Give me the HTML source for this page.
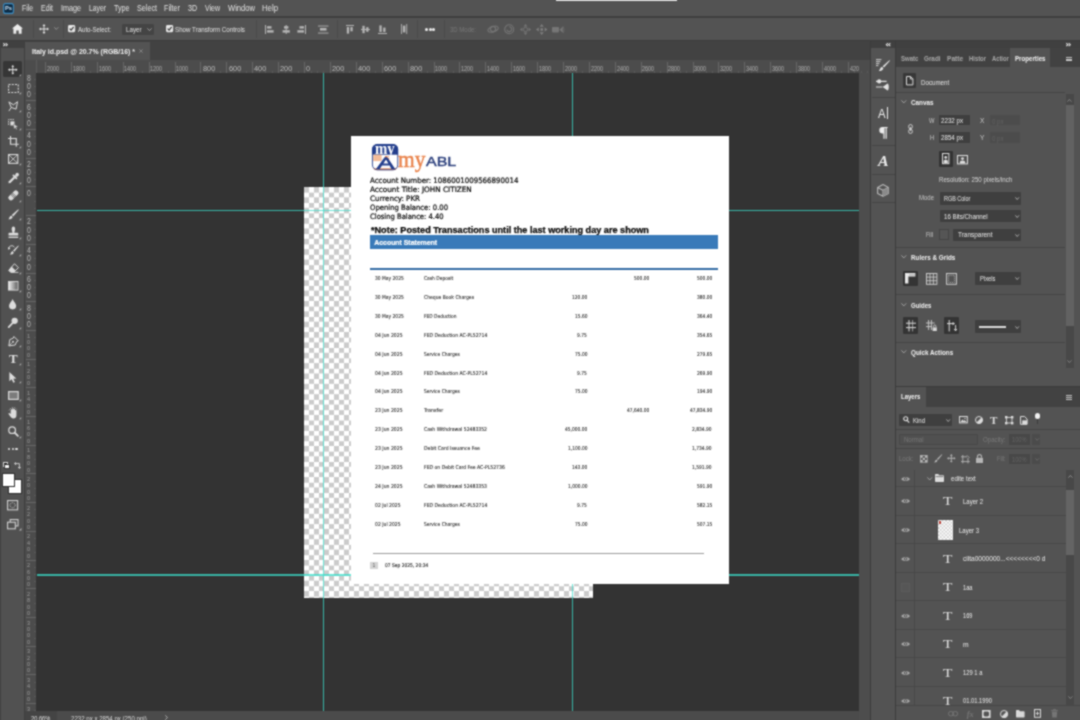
<!DOCTYPE html>
<html lang="en"><head><meta charset="utf-8"><title>Photoshop</title>
<style>
html,body{margin:0;padding:0;background:#535353;}
body{width:1080px;height:720px;overflow:hidden;font-family:"Liberation Sans",sans-serif;}
#r{position:relative;width:1080px;height:720px;overflow:hidden;background:#535353;filter:url(#soft);}
#r div,#r span,#r svg{position:absolute;}
#r svg{overflow:visible;}
.t{white-space:nowrap;line-height:1;transform-origin:0 50%;}
</style></head><body><svg width="0" height="0" style="position:absolute"><filter id="soft" x="0" y="0" width="100%" height="100%" color-interpolation-filters="sRGB"><feConvolveMatrix order="3" kernelMatrix="1 2 1 2 6 2 1 2 1" divisor="18" edgeMode="duplicate" preserveAlpha="true"/></filter></svg><div id="r">
<div style="left:0px;top:0px;width:1080px;height:16px;background:#535353;"></div>
<div style="left:0px;top:16px;width:1080px;height:1.5px;background:#3f3f3f;"></div>
<div style="left:555.5px;top:0px;width:121.5px;height:1.3px;background:#e6e6e6;"></div>
<svg style="left:3.3px;top:2.6px;" width="11" height="11" viewBox="0 0 11 11"><rect x="0.6" y="0.6" width="9.8" height="9.8" rx="2" fill="#0b2a44" stroke="#3f8fc4" stroke-width="1.1"/></svg>
<span class="t" style='left:5.10px;top:6.00px;font-size:5.6px;color:#cfe6f7;font-weight:bold;transform:scaleX(1.023);'>Ps</span>
<span class="t" style='left:22.00px;top:4.00px;font-size:8.4px;color:#e2e2e2;transform:scaleX(0.815);'>File</span>
<span class="t" style='left:41.00px;top:4.00px;font-size:8.4px;color:#e2e2e2;transform:scaleX(0.831);'>Edit</span>
<span class="t" style='left:61.00px;top:4.00px;font-size:8.4px;color:#e2e2e2;transform:scaleX(0.859);'>Image</span>
<span class="t" style='left:89.00px;top:4.00px;font-size:8.4px;color:#e2e2e2;transform:scaleX(0.811);'>Layer</span>
<span class="t" style='left:114.00px;top:4.00px;font-size:8.4px;color:#e2e2e2;transform:scaleX(0.854);'>Type</span>
<span class="t" style='left:137.00px;top:4.00px;font-size:8.4px;color:#e2e2e2;transform:scaleX(0.859);'>Select</span>
<span class="t" style='left:164.00px;top:4.00px;font-size:8.4px;color:#e2e2e2;transform:scaleX(0.859);'>Filter</span>
<span class="t" style='left:188.00px;top:4.00px;font-size:8.4px;color:#e2e2e2;transform:scaleX(0.840);'>3D</span>
<span class="t" style='left:205.00px;top:4.00px;font-size:8.4px;color:#e2e2e2;transform:scaleX(0.833);'>View</span>
<span class="t" style='left:228.00px;top:4.00px;font-size:8.4px;color:#e2e2e2;transform:scaleX(0.906);'>Window</span>
<span class="t" style='left:262.00px;top:4.00px;font-size:8.4px;color:#e2e2e2;transform:scaleX(0.928);'>Help</span>
<div style="left:0px;top:17.5px;width:1080px;height:22.5px;background:#535353;"></div>
<div style="left:0px;top:40px;width:1080px;height:1px;background:#3c3c3c;"></div>
<div style="left:32.5px;top:20px;width:1px;height:18px;background:#4a4a4a;"></div>
<div style="left:63px;top:20px;width:1px;height:18px;background:#4a4a4a;"></div>
<div style="left:255.5px;top:20px;width:1px;height:18px;background:#4a4a4a;"></div>
<div style="left:336.5px;top:20px;width:1px;height:18px;background:#4a4a4a;"></div>
<div style="left:416.5px;top:20px;width:1px;height:18px;background:#4a4a4a;"></div>
<div style="left:443.5px;top:20px;width:1px;height:18px;background:#4a4a4a;"></div>
<svg style="left:12px;top:24.4px;" width="11" height="9.8" viewBox="0 0 11 9.8"><path d="M5.5 0 L11 4.6 L9.6 4.6 L9.6 9.8 L6.7 9.8 L6.7 6.4 L4.3 6.4 L4.3 9.8 L1.4 9.8 L1.4 4.6 L0 4.6 Z" fill="#ececec"/></svg>
<svg style="left:38.5px;top:24px;" width="10" height="10" viewBox="0 0 10 10"><path d="M5 0 L6.5 1.9 L5.45 1.9 L5.45 4.55 L8.1 4.55 L8.1 3.5 L10 5 L8.1 6.5 L8.1 5.45 L5.45 5.45 L5.45 8.1 L6.5 8.1 L5 10 L3.5 8.1 L4.55 8.1 L4.55 5.45 L1.9 5.45 L1.9 6.5 L0 5 L1.9 3.5 L1.9 4.55 L4.55 4.55 L4.55 1.9 L3.5 1.9 Z" fill="#e8e8e8"/></svg>
<svg style="left:54.4px;top:27.4px;" width="4.6" height="3" viewBox="0 0 4.6 3"><path d="M0.3 0.3 L2.3 2.4 L4.3 0.3" fill="none" stroke="#9a9a9a" stroke-width="0.9"/></svg>
<svg style="left:68.3px;top:25.3px;" width="7.2" height="7.2" viewBox="0 0 7.2 7.2"><rect x="0" y="0" width="7.2" height="7.2" rx="1.4" fill="#e6e6e6"/><path d="M1.6 3.7 L3.1 5.2 L5.7 1.9" fill="none" stroke="#3a3a3a" stroke-width="1.2"/></svg>
<svg style="left:165.5px;top:25.3px;" width="7.2" height="7.2" viewBox="0 0 7.2 7.2"><rect x="0" y="0" width="7.2" height="7.2" rx="1.4" fill="#e6e6e6"/><path d="M1.6 3.7 L3.1 5.2 L5.7 1.9" fill="none" stroke="#3a3a3a" stroke-width="1.2"/></svg>
<span class="t" style='left:78.00px;top:25.50px;font-size:7.4px;color:#e2e2e2;transform:scaleX(0.820);'>Auto-Select:</span>
<div style="left:121.7px;top:23.7px;width:32px;height:11.5px;background:#444444;border-radius:1.5px;"></div>
<span class="t" style='left:125.70px;top:26.00px;font-size:7.2px;color:#e2e2e2;transform:scaleX(0.862);'>Layer</span>
<svg style="left:147.3px;top:28px;" width="5" height="3.2" viewBox="0 0 5 3.2"><path d="M0.4 0.4 L2.5 2.6 L4.6 0.4" fill="none" stroke="#a8a8a8" stroke-width="0.9"/></svg>
<span class="t" style='left:175.00px;top:25.50px;font-size:7.4px;color:#e2e2e2;transform:scaleX(0.839);'>Show Transform Controls</span>
<svg style="left:265px;top:24.7px;" width="9" height="9" viewBox="0 0 9 9"><rect x="0" y="0" width="1" height="9" fill="#b6b6b6"/><rect x="2" y="1.2" width="4.5" height="2.4" fill="#b6b6b6"/><rect x="2" y="5.2" width="6.6" height="2.4" fill="#b6b6b6"/></svg>
<svg style="left:281.5px;top:24.7px;" width="9" height="9" viewBox="0 0 9 9"><rect x="3.7" y="0" width="1" height="9" fill="#b6b6b6"/><rect x="2" y="1.2" width="4.4" height="2.4" fill="#b6b6b6"/><rect x="0.6" y="5.2" width="7.2" height="2.4" fill="#b6b6b6"/></svg>
<svg style="left:297px;top:24.7px;" width="9" height="9" viewBox="0 0 9 9"><rect x="8" y="0" width="1" height="9" fill="#b6b6b6"/><rect x="2.5" y="1.2" width="4.5" height="2.4" fill="#b6b6b6"/><rect x="0.4" y="5.2" width="6.6" height="2.4" fill="#b6b6b6"/></svg>
<svg style="left:317.5px;top:24.7px;" width="10.5" height="9" viewBox="0 0 10.5 9"><rect x="0" y="0.6" width="10.5" height="0.9" fill="#b6b6b6"/><rect x="0" y="7.6" width="10.5" height="0.9" fill="#b6b6b6"/><rect x="2" y="3" width="6.5" height="2.6" fill="#b6b6b6"/></svg>
<svg style="left:346px;top:24.7px;" width="8" height="9" viewBox="0 0 8 9"><rect x="0" y="0" width="8" height="1" fill="#b6b6b6"/><rect x="0.8" y="2" width="2.3" height="6.6" fill="#b6b6b6"/><rect x="4.4" y="2" width="2.3" height="4.3" fill="#b6b6b6"/></svg>
<svg style="left:361px;top:24.7px;" width="9" height="9" viewBox="0 0 9 9"><rect x="0" y="4" width="9" height="1" fill="#b6b6b6"/><rect x="1.4" y="0.8" width="2.3" height="7.4" fill="#b6b6b6"/><rect x="5.2" y="2.2" width="2.3" height="4.6" fill="#b6b6b6"/></svg>
<svg style="left:378px;top:24.7px;" width="9" height="9" viewBox="0 0 9 9"><rect x="0" y="8" width="9" height="1" fill="#b6b6b6"/><rect x="1.4" y="0.4" width="2.3" height="6.6" fill="#b6b6b6"/><rect x="5.2" y="2.6" width="2.3" height="4.4" fill="#b6b6b6"/></svg>
<svg style="left:400.5px;top:24px;" width="6.2" height="10" viewBox="0 0 6.2 10"><rect x="0" y="0" width="0.9" height="10" fill="#b6b6b6"/><rect x="5.3" y="0" width="0.9" height="10" fill="#b6b6b6"/><rect x="1.9" y="1.6" width="2.4" height="6.8" fill="#b6b6b6"/></svg>
<div style="left:424.8px;top:27.5px;width:3px;height:3px;background:#f0f0f0;border-radius:50%;"></div>
<div style="left:428.6px;top:27.5px;width:3px;height:3px;background:#f0f0f0;border-radius:50%;"></div>
<div style="left:432.40000000000003px;top:27.5px;width:3px;height:3px;background:#f0f0f0;border-radius:50%;"></div>
<span class="t" style='left:450.00px;top:25.50px;font-size:7.2px;color:#787878;transform:scaleX(0.834);'>3D Mode:</span>
<svg style="left:487px;top:24px;" width="12" height="10" viewBox="0 0 12 10"><ellipse cx="6" cy="5.2" rx="5.3" ry="2.6" fill="none" stroke="#767676" stroke-width="1.1" transform="rotate(-20 6 5)"/><circle cx="6" cy="5" r="2.6" fill="none" stroke="#767676" stroke-width="1.1"/></svg>
<svg style="left:504px;top:23.8px;" width="10.5" height="10.5" viewBox="0 0 10.5 10.5"><circle cx="5.2" cy="5.2" r="4.5" fill="none" stroke="#767676" stroke-width="1.1"/><path d="M5.2 2.8 A2.4 2.4 0 1 1 2.9 5.6" fill="none" stroke="#767676" stroke-width="1.1"/></svg>
<svg style="left:520px;top:23.5px;" width="11" height="11" viewBox="0 0 11 11"><path d="M5.5 0 L7.5 2.4 L3.5 2.4 Z M5.5 11 L7.5 8.6 L3.5 8.6 Z M0 5.5 L2.4 3.5 L2.4 7.5 Z M11 5.5 L8.6 3.5 L8.6 7.5 Z" fill="#767676"/><circle cx="5.5" cy="5.5" r="2.1" fill="none" stroke="#767676" stroke-width="1"/></svg>
<svg style="left:536px;top:23.5px;" width="11.5" height="11" viewBox="0 0 11.5 11"><path d="M5.7 0 L7.7 2.8 L3.7 2.8 Z M5.7 11 L7.7 8.2 L3.7 8.2 Z M0 5.5 L2.8 3.5 L2.8 7.5 Z M11.4 5.5 L8.6 3.5 L8.6 7.5 Z" fill="#808080"/><rect x="4.4" y="4.2" width="2.6" height="2.6" fill="#808080"/></svg>
<svg style="left:552px;top:25.5px;" width="12" height="7.5" viewBox="0 0 12 7.5"><rect x="0" y="1" width="7" height="5.4" rx="0.8" fill="#767676"/><path d="M7.4 3.7 L10.8 0.6 L10.8 6.8 Z" fill="#767676"/><path d="M11.4 0.5 L12 3.7 L11.4 7" fill="none" stroke="#767676" stroke-width="0.6"/></svg>
<div style="left:0px;top:41px;width:1080px;height:19px;background:#424242;"></div>
<div style="left:0px;top:41px;width:24.5px;height:7.3px;background:#404040;"></div>
<svg style="left:3.4px;top:42.8px;" width="5" height="3.4" viewBox="0 0 5 3.4"><path d="M0.3 0.2 L1.9 1.7 L0.3 3.2 M2.7 0.2 L4.3 1.7 L2.7 3.2" fill="none" stroke="#e4e4e4" stroke-width="1.1"/></svg>
<div style="left:25px;top:41.5px;width:124.5px;height:18.5px;background:#535353;"></div>
<span class="t" style='left:32.00px;top:47.50px;font-size:8px;color:#f2f2f2;font-weight:bold;transform:scaleX(0.869);'>Italy id.psd @ 20.7% (RGB/16) *</span>
<svg style="left:139.2px;top:49px;" width="4" height="4" viewBox="0 0 4 4"><path d="M0.3 0.3 L3.7 3.7 M3.7 0.3 L0.3 3.7" stroke="#8c8c8c" stroke-width="0.8"/></svg>
<div style="left:25px;top:60px;width:845px;height:660px;background:#333333;"></div>
<div style="left:25px;top:60px;width:844.5px;height:13px;background:#4c4c4c;"></div>
<div style="left:25px;top:73px;width:11.4px;height:638px;background:#4c4c4c;"></div>
<div style="left:859px;top:73px;width:10.5px;height:647px;background:#4d4d4d;"></div>
<div style="left:869.5px;top:41px;width:1.3px;height:679px;background:#3b3b3b;"></div>
<div style="left:45.0px;top:62px;width:1px;height:11px;background:#676767;"></div>
<span class="t" style='left:46.70px;top:66.00px;font-size:6.4px;color:#b0b0b0;transform:scaleX(0.837);'>2000</span>
<div style="left:51.5px;top:71px;width:1px;height:2px;background:#5a5a5a;"></div>
<div style="left:58.0px;top:71px;width:1px;height:2px;background:#5a5a5a;"></div>
<div style="left:64.4px;top:71px;width:1px;height:2px;background:#5a5a5a;"></div>
<div style="left:70.9px;top:62px;width:1px;height:11px;background:#676767;"></div>
<span class="t" style='left:72.60px;top:66.00px;font-size:6.4px;color:#b0b0b0;transform:scaleX(0.837);'>1800</span>
<div style="left:77.4px;top:71px;width:1px;height:2px;background:#5a5a5a;"></div>
<div style="left:83.9px;top:71px;width:1px;height:2px;background:#5a5a5a;"></div>
<div style="left:90.3px;top:71px;width:1px;height:2px;background:#5a5a5a;"></div>
<div style="left:96.8px;top:62px;width:1px;height:11px;background:#676767;"></div>
<span class="t" style='left:98.50px;top:66.00px;font-size:6.4px;color:#b0b0b0;transform:scaleX(0.837);'>1600</span>
<div style="left:103.3px;top:71px;width:1px;height:2px;background:#5a5a5a;"></div>
<div style="left:109.8px;top:71px;width:1px;height:2px;background:#5a5a5a;"></div>
<div style="left:116.2px;top:71px;width:1px;height:2px;background:#5a5a5a;"></div>
<div style="left:122.7px;top:62px;width:1px;height:11px;background:#676767;"></div>
<span class="t" style='left:124.40px;top:66.00px;font-size:6.4px;color:#b0b0b0;transform:scaleX(0.837);'>1400</span>
<div style="left:129.2px;top:71px;width:1px;height:2px;background:#5a5a5a;"></div>
<div style="left:135.7px;top:71px;width:1px;height:2px;background:#5a5a5a;"></div>
<div style="left:142.1px;top:71px;width:1px;height:2px;background:#5a5a5a;"></div>
<div style="left:148.6px;top:62px;width:1px;height:11px;background:#676767;"></div>
<span class="t" style='left:150.30px;top:66.00px;font-size:6.4px;color:#b0b0b0;transform:scaleX(0.837);'>1200</span>
<div style="left:155.1px;top:71px;width:1px;height:2px;background:#5a5a5a;"></div>
<div style="left:161.6px;top:71px;width:1px;height:2px;background:#5a5a5a;"></div>
<div style="left:168.0px;top:71px;width:1px;height:2px;background:#5a5a5a;"></div>
<div style="left:174.5px;top:62px;width:1px;height:11px;background:#676767;"></div>
<span class="t" style='left:176.20px;top:66.00px;font-size:6.4px;color:#b0b0b0;transform:scaleX(0.837);'>1000</span>
<div style="left:181.0px;top:71px;width:1px;height:2px;background:#5a5a5a;"></div>
<div style="left:187.4px;top:71px;width:1px;height:2px;background:#5a5a5a;"></div>
<div style="left:193.9px;top:71px;width:1px;height:2px;background:#5a5a5a;"></div>
<div style="left:200.4px;top:62px;width:1px;height:11px;background:#676767;"></div>
<span class="t" style='left:202.60px;top:65.00px;font-size:7.8px;color:#bcbcbc;transform:scaleX(0.945);'>800</span>
<div style="left:206.9px;top:71px;width:1px;height:2px;background:#5a5a5a;"></div>
<div style="left:213.3px;top:71px;width:1px;height:2px;background:#5a5a5a;"></div>
<div style="left:219.8px;top:71px;width:1px;height:2px;background:#5a5a5a;"></div>
<div style="left:226.3px;top:62px;width:1px;height:11px;background:#676767;"></div>
<span class="t" style='left:228.50px;top:65.00px;font-size:7.8px;color:#bcbcbc;transform:scaleX(0.945);'>600</span>
<div style="left:232.8px;top:71px;width:1px;height:2px;background:#5a5a5a;"></div>
<div style="left:239.2px;top:71px;width:1px;height:2px;background:#5a5a5a;"></div>
<div style="left:245.7px;top:71px;width:1px;height:2px;background:#5a5a5a;"></div>
<div style="left:252.2px;top:62px;width:1px;height:11px;background:#676767;"></div>
<span class="t" style='left:254.40px;top:65.00px;font-size:7.8px;color:#bcbcbc;transform:scaleX(0.945);'>400</span>
<div style="left:258.7px;top:71px;width:1px;height:2px;background:#5a5a5a;"></div>
<div style="left:265.1px;top:71px;width:1px;height:2px;background:#5a5a5a;"></div>
<div style="left:271.6px;top:71px;width:1px;height:2px;background:#5a5a5a;"></div>
<div style="left:278.1px;top:62px;width:1px;height:11px;background:#676767;"></div>
<span class="t" style='left:280.30px;top:65.00px;font-size:7.8px;color:#bcbcbc;transform:scaleX(0.945);'>200</span>
<div style="left:284.6px;top:71px;width:1px;height:2px;background:#5a5a5a;"></div>
<div style="left:291.1px;top:71px;width:1px;height:2px;background:#5a5a5a;"></div>
<div style="left:297.5px;top:71px;width:1px;height:2px;background:#5a5a5a;"></div>
<div style="left:304.0px;top:62px;width:1px;height:11px;background:#676767;"></div>
<span class="t" style='left:306.20px;top:65.00px;font-size:7.8px;color:#bcbcbc;transform:scaleX(0.944);'>0</span>
<div style="left:310.5px;top:71px;width:1px;height:2px;background:#5a5a5a;"></div>
<div style="left:316.9px;top:71px;width:1px;height:2px;background:#5a5a5a;"></div>
<div style="left:323.4px;top:71px;width:1px;height:2px;background:#5a5a5a;"></div>
<div style="left:329.9px;top:62px;width:1px;height:11px;background:#676767;"></div>
<span class="t" style='left:332.10px;top:65.00px;font-size:7.8px;color:#bcbcbc;transform:scaleX(0.945);'>200</span>
<div style="left:336.4px;top:71px;width:1px;height:2px;background:#5a5a5a;"></div>
<div style="left:342.8px;top:71px;width:1px;height:2px;background:#5a5a5a;"></div>
<div style="left:349.3px;top:71px;width:1px;height:2px;background:#5a5a5a;"></div>
<div style="left:355.8px;top:62px;width:1px;height:11px;background:#676767;"></div>
<span class="t" style='left:358.00px;top:65.00px;font-size:7.8px;color:#bcbcbc;transform:scaleX(0.945);'>400</span>
<div style="left:362.3px;top:71px;width:1px;height:2px;background:#5a5a5a;"></div>
<div style="left:368.8px;top:71px;width:1px;height:2px;background:#5a5a5a;"></div>
<div style="left:375.2px;top:71px;width:1px;height:2px;background:#5a5a5a;"></div>
<div style="left:381.7px;top:62px;width:1px;height:11px;background:#676767;"></div>
<span class="t" style='left:383.90px;top:65.00px;font-size:7.8px;color:#bcbcbc;transform:scaleX(0.945);'>600</span>
<div style="left:388.2px;top:71px;width:1px;height:2px;background:#5a5a5a;"></div>
<div style="left:394.6px;top:71px;width:1px;height:2px;background:#5a5a5a;"></div>
<div style="left:401.1px;top:71px;width:1px;height:2px;background:#5a5a5a;"></div>
<div style="left:407.6px;top:62px;width:1px;height:11px;background:#676767;"></div>
<span class="t" style='left:409.80px;top:65.00px;font-size:7.8px;color:#bcbcbc;transform:scaleX(0.945);'>800</span>
<div style="left:414.1px;top:71px;width:1px;height:2px;background:#5a5a5a;"></div>
<div style="left:420.6px;top:71px;width:1px;height:2px;background:#5a5a5a;"></div>
<div style="left:427.0px;top:71px;width:1px;height:2px;background:#5a5a5a;"></div>
<div style="left:433.5px;top:62px;width:1px;height:11px;background:#676767;"></div>
<span class="t" style='left:435.20px;top:66.00px;font-size:6.4px;color:#b0b0b0;transform:scaleX(0.837);'>1000</span>
<div style="left:440.0px;top:71px;width:1px;height:2px;background:#5a5a5a;"></div>
<div style="left:446.4px;top:71px;width:1px;height:2px;background:#5a5a5a;"></div>
<div style="left:452.9px;top:71px;width:1px;height:2px;background:#5a5a5a;"></div>
<div style="left:459.4px;top:62px;width:1px;height:11px;background:#676767;"></div>
<span class="t" style='left:461.10px;top:66.00px;font-size:6.4px;color:#b0b0b0;transform:scaleX(0.837);'>1200</span>
<div style="left:465.9px;top:71px;width:1px;height:2px;background:#5a5a5a;"></div>
<div style="left:472.3px;top:71px;width:1px;height:2px;background:#5a5a5a;"></div>
<div style="left:478.8px;top:71px;width:1px;height:2px;background:#5a5a5a;"></div>
<div style="left:485.3px;top:62px;width:1px;height:11px;background:#676767;"></div>
<span class="t" style='left:487.00px;top:66.00px;font-size:6.4px;color:#b0b0b0;transform:scaleX(0.837);'>1400</span>
<div style="left:491.8px;top:71px;width:1px;height:2px;background:#5a5a5a;"></div>
<div style="left:498.2px;top:71px;width:1px;height:2px;background:#5a5a5a;"></div>
<div style="left:504.7px;top:71px;width:1px;height:2px;background:#5a5a5a;"></div>
<div style="left:511.2px;top:62px;width:1px;height:11px;background:#676767;"></div>
<span class="t" style='left:512.90px;top:66.00px;font-size:6.4px;color:#b0b0b0;transform:scaleX(0.837);'>1600</span>
<div style="left:517.7px;top:71px;width:1px;height:2px;background:#5a5a5a;"></div>
<div style="left:524.1px;top:71px;width:1px;height:2px;background:#5a5a5a;"></div>
<div style="left:530.6px;top:71px;width:1px;height:2px;background:#5a5a5a;"></div>
<div style="left:537.1px;top:62px;width:1px;height:11px;background:#676767;"></div>
<span class="t" style='left:538.80px;top:66.00px;font-size:6.4px;color:#b0b0b0;transform:scaleX(0.837);'>1800</span>
<div style="left:543.6px;top:71px;width:1px;height:2px;background:#5a5a5a;"></div>
<div style="left:550.1px;top:71px;width:1px;height:2px;background:#5a5a5a;"></div>
<div style="left:556.5px;top:71px;width:1px;height:2px;background:#5a5a5a;"></div>
<div style="left:563.0px;top:62px;width:1px;height:11px;background:#676767;"></div>
<span class="t" style='left:564.70px;top:66.00px;font-size:6.4px;color:#b0b0b0;transform:scaleX(0.837);'>2000</span>
<div style="left:569.5px;top:71px;width:1px;height:2px;background:#5a5a5a;"></div>
<div style="left:576.0px;top:71px;width:1px;height:2px;background:#5a5a5a;"></div>
<div style="left:582.4px;top:71px;width:1px;height:2px;background:#5a5a5a;"></div>
<div style="left:588.9px;top:62px;width:1px;height:11px;background:#676767;"></div>
<span class="t" style='left:590.60px;top:66.00px;font-size:6.4px;color:#b0b0b0;transform:scaleX(0.837);'>2200</span>
<div style="left:595.4px;top:71px;width:1px;height:2px;background:#5a5a5a;"></div>
<div style="left:601.9px;top:71px;width:1px;height:2px;background:#5a5a5a;"></div>
<div style="left:608.3px;top:71px;width:1px;height:2px;background:#5a5a5a;"></div>
<div style="left:614.8px;top:62px;width:1px;height:11px;background:#676767;"></div>
<span class="t" style='left:616.50px;top:66.00px;font-size:6.4px;color:#b0b0b0;transform:scaleX(0.837);'>2400</span>
<div style="left:621.3px;top:71px;width:1px;height:2px;background:#5a5a5a;"></div>
<div style="left:627.8px;top:71px;width:1px;height:2px;background:#5a5a5a;"></div>
<div style="left:634.2px;top:71px;width:1px;height:2px;background:#5a5a5a;"></div>
<div style="left:640.7px;top:62px;width:1px;height:11px;background:#676767;"></div>
<span class="t" style='left:642.40px;top:66.00px;font-size:6.4px;color:#b0b0b0;transform:scaleX(0.837);'>2600</span>
<div style="left:647.2px;top:71px;width:1px;height:2px;background:#5a5a5a;"></div>
<div style="left:653.7px;top:71px;width:1px;height:2px;background:#5a5a5a;"></div>
<div style="left:660.1px;top:71px;width:1px;height:2px;background:#5a5a5a;"></div>
<div style="left:666.6px;top:62px;width:1px;height:11px;background:#676767;"></div>
<span class="t" style='left:668.30px;top:66.00px;font-size:6.4px;color:#b0b0b0;transform:scaleX(0.837);'>2800</span>
<div style="left:673.1px;top:71px;width:1px;height:2px;background:#5a5a5a;"></div>
<div style="left:679.5px;top:71px;width:1px;height:2px;background:#5a5a5a;"></div>
<div style="left:686.0px;top:71px;width:1px;height:2px;background:#5a5a5a;"></div>
<div style="left:692.5px;top:62px;width:1px;height:11px;background:#676767;"></div>
<span class="t" style='left:694.20px;top:66.00px;font-size:6.4px;color:#b0b0b0;transform:scaleX(0.837);'>3000</span>
<div style="left:699.0px;top:71px;width:1px;height:2px;background:#5a5a5a;"></div>
<div style="left:705.5px;top:71px;width:1px;height:2px;background:#5a5a5a;"></div>
<div style="left:711.9px;top:71px;width:1px;height:2px;background:#5a5a5a;"></div>
<div style="left:718.4px;top:62px;width:1px;height:11px;background:#676767;"></div>
<span class="t" style='left:720.10px;top:66.00px;font-size:6.4px;color:#b0b0b0;transform:scaleX(0.837);'>3200</span>
<div style="left:724.9px;top:71px;width:1px;height:2px;background:#5a5a5a;"></div>
<div style="left:731.4px;top:71px;width:1px;height:2px;background:#5a5a5a;"></div>
<div style="left:737.8px;top:71px;width:1px;height:2px;background:#5a5a5a;"></div>
<div style="left:744.3px;top:62px;width:1px;height:11px;background:#676767;"></div>
<span class="t" style='left:746.00px;top:66.00px;font-size:6.4px;color:#b0b0b0;transform:scaleX(0.837);'>3400</span>
<div style="left:750.8px;top:71px;width:1px;height:2px;background:#5a5a5a;"></div>
<div style="left:757.2px;top:71px;width:1px;height:2px;background:#5a5a5a;"></div>
<div style="left:763.7px;top:71px;width:1px;height:2px;background:#5a5a5a;"></div>
<div style="left:770.2px;top:62px;width:1px;height:11px;background:#676767;"></div>
<span class="t" style='left:771.90px;top:66.00px;font-size:6.4px;color:#b0b0b0;transform:scaleX(0.837);'>3600</span>
<div style="left:776.7px;top:71px;width:1px;height:2px;background:#5a5a5a;"></div>
<div style="left:783.2px;top:71px;width:1px;height:2px;background:#5a5a5a;"></div>
<div style="left:789.6px;top:71px;width:1px;height:2px;background:#5a5a5a;"></div>
<div style="left:796.1px;top:62px;width:1px;height:11px;background:#676767;"></div>
<span class="t" style='left:797.80px;top:66.00px;font-size:6.4px;color:#b0b0b0;transform:scaleX(0.837);'>3800</span>
<div style="left:802.6px;top:71px;width:1px;height:2px;background:#5a5a5a;"></div>
<div style="left:809.0px;top:71px;width:1px;height:2px;background:#5a5a5a;"></div>
<div style="left:815.5px;top:71px;width:1px;height:2px;background:#5a5a5a;"></div>
<div style="left:822.0px;top:62px;width:1px;height:11px;background:#676767;"></div>
<span class="t" style='left:823.70px;top:66.00px;font-size:6.4px;color:#b0b0b0;transform:scaleX(0.837);'>4000</span>
<div style="left:828.5px;top:71px;width:1px;height:2px;background:#5a5a5a;"></div>
<div style="left:835.0px;top:71px;width:1px;height:2px;background:#5a5a5a;"></div>
<div style="left:841.4px;top:71px;width:1px;height:2px;background:#5a5a5a;"></div>
<div style="left:847.9px;top:62px;width:1px;height:11px;background:#676767;"></div>
<span class="t" style='left:849.60px;top:66.00px;font-size:6.4px;color:#b0b0b0;transform:scaleX(0.843);'>420</span>
<div style="left:854.4px;top:71px;width:1px;height:2px;background:#5a5a5a;"></div>
<div style="left:860.9px;top:71px;width:1px;height:2px;background:#5a5a5a;"></div>
<div style="left:867.3px;top:71px;width:1px;height:2px;background:#5a5a5a;"></div>
<div style="left:25px;top:60px;width:12px;height:13px;background:#4c4c4c;"></div>
<div style="left:36px;top:60px;width:0.7px;height:13px;background:#5c5c5c;"></div>
<span class="t" style='left:26.90px;top:74.00px;font-size:8.6px;color:#bcbcbc;transform:scaleX(0.795);'>8</span>
<span class="t" style='left:26.90px;top:82.00px;font-size:8.6px;color:#bcbcbc;transform:scaleX(0.795);'>0</span>
<span class="t" style='left:26.90px;top:90.00px;font-size:8.6px;color:#bcbcbc;transform:scaleX(0.795);'>0</span>
<div style="left:34.4px;top:78.8px;width:2px;height:1px;background:#595959;"></div>
<div style="left:34.4px;top:86.0px;width:2px;height:1px;background:#595959;"></div>
<div style="left:34.4px;top:93.1px;width:2px;height:1px;background:#595959;"></div>
<div style="left:26px;top:100.3px;width:10.4px;height:1px;background:#676767;"></div>
<span class="t" style='left:26.90px;top:103.00px;font-size:8.6px;color:#bcbcbc;transform:scaleX(0.795);'>6</span>
<span class="t" style='left:26.90px;top:111.00px;font-size:8.6px;color:#bcbcbc;transform:scaleX(0.795);'>0</span>
<span class="t" style='left:26.90px;top:119.00px;font-size:8.6px;color:#bcbcbc;transform:scaleX(0.795);'>0</span>
<div style="left:34.4px;top:107.5px;width:2px;height:1px;background:#595959;"></div>
<div style="left:34.4px;top:114.7px;width:2px;height:1px;background:#595959;"></div>
<div style="left:34.4px;top:121.8px;width:2px;height:1px;background:#595959;"></div>
<div style="left:26px;top:129.0px;width:10.4px;height:1px;background:#676767;"></div>
<span class="t" style='left:26.90px;top:131.00px;font-size:8.6px;color:#bcbcbc;transform:scaleX(0.795);'>4</span>
<span class="t" style='left:26.90px;top:139.50px;font-size:8.6px;color:#bcbcbc;transform:scaleX(0.795);'>0</span>
<span class="t" style='left:26.90px;top:148.00px;font-size:8.6px;color:#bcbcbc;transform:scaleX(0.795);'>0</span>
<div style="left:34.4px;top:136.2px;width:2px;height:1px;background:#595959;"></div>
<div style="left:34.4px;top:143.3px;width:2px;height:1px;background:#595959;"></div>
<div style="left:34.4px;top:150.5px;width:2px;height:1px;background:#595959;"></div>
<div style="left:26px;top:157.7px;width:10.4px;height:1px;background:#676767;"></div>
<span class="t" style='left:26.90px;top:160.00px;font-size:8.6px;color:#bcbcbc;transform:scaleX(0.795);'>2</span>
<span class="t" style='left:26.90px;top:168.00px;font-size:8.6px;color:#bcbcbc;transform:scaleX(0.795);'>0</span>
<span class="t" style='left:26.90px;top:176.00px;font-size:8.6px;color:#bcbcbc;transform:scaleX(0.795);'>0</span>
<div style="left:34.4px;top:164.9px;width:2px;height:1px;background:#595959;"></div>
<div style="left:34.4px;top:172.1px;width:2px;height:1px;background:#595959;"></div>
<div style="left:34.4px;top:179.2px;width:2px;height:1px;background:#595959;"></div>
<div style="left:26px;top:186.4px;width:10.4px;height:1px;background:#676767;"></div>
<span class="t" style='left:26.90px;top:189.00px;font-size:8.6px;color:#bcbcbc;transform:scaleX(0.795);'>0</span>
<div style="left:34.4px;top:193.6px;width:2px;height:1px;background:#595959;"></div>
<div style="left:34.4px;top:200.8px;width:2px;height:1px;background:#595959;"></div>
<div style="left:34.4px;top:207.9px;width:2px;height:1px;background:#595959;"></div>
<div style="left:26px;top:215.1px;width:10.4px;height:1px;background:#676767;"></div>
<span class="t" style='left:26.90px;top:217.00px;font-size:8.6px;color:#bcbcbc;transform:scaleX(0.795);'>2</span>
<span class="t" style='left:26.90px;top:226.00px;font-size:8.6px;color:#bcbcbc;transform:scaleX(0.795);'>0</span>
<span class="t" style='left:26.90px;top:234.00px;font-size:8.6px;color:#bcbcbc;transform:scaleX(0.795);'>0</span>
<div style="left:34.4px;top:222.3px;width:2px;height:1px;background:#595959;"></div>
<div style="left:34.4px;top:229.4px;width:2px;height:1px;background:#595959;"></div>
<div style="left:34.4px;top:236.6px;width:2px;height:1px;background:#595959;"></div>
<div style="left:26px;top:243.8px;width:10.4px;height:1px;background:#676767;"></div>
<span class="t" style='left:26.90px;top:246.00px;font-size:8.6px;color:#bcbcbc;transform:scaleX(0.795);'>4</span>
<span class="t" style='left:26.90px;top:254.00px;font-size:8.6px;color:#bcbcbc;transform:scaleX(0.795);'>0</span>
<span class="t" style='left:26.90px;top:262.50px;font-size:8.6px;color:#bcbcbc;transform:scaleX(0.795);'>0</span>
<div style="left:34.4px;top:251.0px;width:2px;height:1px;background:#595959;"></div>
<div style="left:34.4px;top:258.2px;width:2px;height:1px;background:#595959;"></div>
<div style="left:34.4px;top:265.3px;width:2px;height:1px;background:#595959;"></div>
<div style="left:26px;top:272.5px;width:10.4px;height:1px;background:#676767;"></div>
<span class="t" style='left:26.90px;top:275.00px;font-size:8.6px;color:#bcbcbc;transform:scaleX(0.795);'>6</span>
<span class="t" style='left:26.90px;top:283.00px;font-size:8.6px;color:#bcbcbc;transform:scaleX(0.795);'>0</span>
<span class="t" style='left:26.90px;top:291.00px;font-size:8.6px;color:#bcbcbc;transform:scaleX(0.795);'>0</span>
<div style="left:34.4px;top:279.7px;width:2px;height:1px;background:#595959;"></div>
<div style="left:34.4px;top:286.9px;width:2px;height:1px;background:#595959;"></div>
<div style="left:34.4px;top:294.0px;width:2px;height:1px;background:#595959;"></div>
<div style="left:26px;top:301.2px;width:10.4px;height:1px;background:#676767;"></div>
<span class="t" style='left:26.90px;top:303.50px;font-size:8.6px;color:#bcbcbc;transform:scaleX(0.795);'>8</span>
<span class="t" style='left:26.90px;top:312.00px;font-size:8.6px;color:#bcbcbc;transform:scaleX(0.795);'>0</span>
<span class="t" style='left:26.90px;top:320.00px;font-size:8.6px;color:#bcbcbc;transform:scaleX(0.795);'>0</span>
<div style="left:34.4px;top:308.4px;width:2px;height:1px;background:#595959;"></div>
<div style="left:34.4px;top:315.6px;width:2px;height:1px;background:#595959;"></div>
<div style="left:34.4px;top:322.7px;width:2px;height:1px;background:#595959;"></div>
<div style="left:26px;top:329.9px;width:10.4px;height:1px;background:#676767;"></div>
<span class="t" style='left:26.60px;top:333.50px;font-size:5.6px;color:#9c9c9c;transform:scaleX(0.992);'>1</span>
<span class="t" style='left:26.60px;top:340.00px;font-size:5.6px;color:#9c9c9c;transform:scaleX(0.992);'>0</span>
<span class="t" style='left:26.60px;top:346.00px;font-size:5.6px;color:#9c9c9c;transform:scaleX(0.992);'>0</span>
<span class="t" style='left:26.60px;top:353.00px;font-size:5.6px;color:#9c9c9c;transform:scaleX(0.992);'>0</span>
<div style="left:34.4px;top:337.1px;width:2px;height:1px;background:#595959;"></div>
<div style="left:34.4px;top:344.2px;width:2px;height:1px;background:#595959;"></div>
<div style="left:34.4px;top:351.4px;width:2px;height:1px;background:#595959;"></div>
<div style="left:26px;top:358.6px;width:10.4px;height:1px;background:#676767;"></div>
<span class="t" style='left:26.60px;top:362.00px;font-size:5.6px;color:#9c9c9c;transform:scaleX(0.992);'>1</span>
<span class="t" style='left:26.60px;top:369.00px;font-size:5.6px;color:#9c9c9c;transform:scaleX(0.992);'>2</span>
<span class="t" style='left:26.60px;top:375.00px;font-size:5.6px;color:#9c9c9c;transform:scaleX(0.992);'>0</span>
<span class="t" style='left:26.60px;top:381.00px;font-size:5.6px;color:#9c9c9c;transform:scaleX(0.992);'>0</span>
<div style="left:34.4px;top:365.8px;width:2px;height:1px;background:#595959;"></div>
<div style="left:34.4px;top:373.0px;width:2px;height:1px;background:#595959;"></div>
<div style="left:34.4px;top:380.1px;width:2px;height:1px;background:#595959;"></div>
<div style="left:26px;top:387.3px;width:10.4px;height:1px;background:#676767;"></div>
<span class="t" style='left:26.60px;top:391.00px;font-size:5.6px;color:#9c9c9c;transform:scaleX(0.992);'>1</span>
<span class="t" style='left:26.60px;top:397.00px;font-size:5.6px;color:#9c9c9c;transform:scaleX(0.992);'>4</span>
<span class="t" style='left:26.60px;top:404.00px;font-size:5.6px;color:#9c9c9c;transform:scaleX(0.992);'>0</span>
<span class="t" style='left:26.60px;top:410.00px;font-size:5.6px;color:#9c9c9c;transform:scaleX(0.992);'>0</span>
<div style="left:34.4px;top:394.5px;width:2px;height:1px;background:#595959;"></div>
<div style="left:34.4px;top:401.7px;width:2px;height:1px;background:#595959;"></div>
<div style="left:34.4px;top:408.8px;width:2px;height:1px;background:#595959;"></div>
<div style="left:26px;top:416.0px;width:10.4px;height:1px;background:#676767;"></div>
<span class="t" style='left:26.60px;top:420.00px;font-size:5.6px;color:#9c9c9c;transform:scaleX(0.992);'>1</span>
<span class="t" style='left:26.60px;top:426.00px;font-size:5.6px;color:#9c9c9c;transform:scaleX(0.992);'>6</span>
<span class="t" style='left:26.60px;top:432.00px;font-size:5.6px;color:#9c9c9c;transform:scaleX(0.992);'>0</span>
<span class="t" style='left:26.60px;top:439.00px;font-size:5.6px;color:#9c9c9c;transform:scaleX(0.992);'>0</span>
<div style="left:34.4px;top:423.2px;width:2px;height:1px;background:#595959;"></div>
<div style="left:34.4px;top:430.4px;width:2px;height:1px;background:#595959;"></div>
<div style="left:34.4px;top:437.5px;width:2px;height:1px;background:#595959;"></div>
<div style="left:26px;top:444.7px;width:10.4px;height:1px;background:#676767;"></div>
<span class="t" style='left:26.60px;top:448.00px;font-size:5.6px;color:#9c9c9c;transform:scaleX(0.992);'>1</span>
<span class="t" style='left:26.60px;top:455.00px;font-size:5.6px;color:#9c9c9c;transform:scaleX(0.992);'>8</span>
<span class="t" style='left:26.60px;top:461.00px;font-size:5.6px;color:#9c9c9c;transform:scaleX(0.992);'>0</span>
<span class="t" style='left:26.60px;top:467.50px;font-size:5.6px;color:#9c9c9c;transform:scaleX(0.992);'>0</span>
<div style="left:34.4px;top:451.9px;width:2px;height:1px;background:#595959;"></div>
<div style="left:34.4px;top:459.1px;width:2px;height:1px;background:#595959;"></div>
<div style="left:34.4px;top:466.2px;width:2px;height:1px;background:#595959;"></div>
<div style="left:26px;top:473.4px;width:10.4px;height:1px;background:#676767;"></div>
<span class="t" style='left:26.60px;top:477.00px;font-size:5.6px;color:#9c9c9c;transform:scaleX(0.992);'>2</span>
<span class="t" style='left:26.60px;top:483.00px;font-size:5.6px;color:#9c9c9c;transform:scaleX(0.992);'>0</span>
<span class="t" style='left:26.60px;top:490.00px;font-size:5.6px;color:#9c9c9c;transform:scaleX(0.992);'>0</span>
<span class="t" style='left:26.60px;top:496.00px;font-size:5.6px;color:#9c9c9c;transform:scaleX(0.992);'>0</span>
<div style="left:34.4px;top:480.6px;width:2px;height:1px;background:#595959;"></div>
<div style="left:34.4px;top:487.8px;width:2px;height:1px;background:#595959;"></div>
<div style="left:34.4px;top:494.9px;width:2px;height:1px;background:#595959;"></div>
<div style="left:26px;top:502.1px;width:10.4px;height:1px;background:#676767;"></div>
<span class="t" style='left:26.60px;top:506.00px;font-size:5.6px;color:#9c9c9c;transform:scaleX(0.992);'>2</span>
<span class="t" style='left:26.60px;top:512.00px;font-size:5.6px;color:#9c9c9c;transform:scaleX(0.992);'>2</span>
<span class="t" style='left:26.60px;top:518.50px;font-size:5.6px;color:#9c9c9c;transform:scaleX(0.992);'>0</span>
<span class="t" style='left:26.60px;top:525.00px;font-size:5.6px;color:#9c9c9c;transform:scaleX(0.992);'>0</span>
<div style="left:34.4px;top:509.3px;width:2px;height:1px;background:#595959;"></div>
<div style="left:34.4px;top:516.5px;width:2px;height:1px;background:#595959;"></div>
<div style="left:34.4px;top:523.6px;width:2px;height:1px;background:#595959;"></div>
<div style="left:26px;top:530.8px;width:10.4px;height:1px;background:#676767;"></div>
<span class="t" style='left:26.60px;top:534.00px;font-size:5.6px;color:#9c9c9c;transform:scaleX(0.992);'>2</span>
<span class="t" style='left:26.60px;top:541.00px;font-size:5.6px;color:#9c9c9c;transform:scaleX(0.992);'>4</span>
<span class="t" style='left:26.60px;top:547.00px;font-size:5.6px;color:#9c9c9c;transform:scaleX(0.992);'>0</span>
<span class="t" style='left:26.60px;top:554.00px;font-size:5.6px;color:#9c9c9c;transform:scaleX(0.992);'>0</span>
<div style="left:34.4px;top:538.0px;width:2px;height:1px;background:#595959;"></div>
<div style="left:34.4px;top:545.1px;width:2px;height:1px;background:#595959;"></div>
<div style="left:34.4px;top:552.3px;width:2px;height:1px;background:#595959;"></div>
<div style="left:26px;top:559.5px;width:10.4px;height:1px;background:#676767;"></div>
<span class="t" style='left:26.60px;top:563.00px;font-size:5.6px;color:#9c9c9c;transform:scaleX(0.992);'>2</span>
<span class="t" style='left:26.60px;top:569.50px;font-size:5.6px;color:#9c9c9c;transform:scaleX(0.992);'>6</span>
<span class="t" style='left:26.60px;top:576.00px;font-size:5.6px;color:#9c9c9c;transform:scaleX(0.992);'>0</span>
<span class="t" style='left:26.60px;top:582.00px;font-size:5.6px;color:#9c9c9c;transform:scaleX(0.992);'>0</span>
<div style="left:34.4px;top:566.7px;width:2px;height:1px;background:#595959;"></div>
<div style="left:34.4px;top:573.9px;width:2px;height:1px;background:#595959;"></div>
<div style="left:34.4px;top:581.0px;width:2px;height:1px;background:#595959;"></div>
<div style="left:26px;top:588.2px;width:10.4px;height:1px;background:#676767;"></div>
<span class="t" style='left:26.60px;top:592.00px;font-size:5.6px;color:#9c9c9c;transform:scaleX(0.992);'>2</span>
<span class="t" style='left:26.60px;top:598.00px;font-size:5.6px;color:#9c9c9c;transform:scaleX(0.992);'>8</span>
<span class="t" style='left:26.60px;top:605.00px;font-size:5.6px;color:#9c9c9c;transform:scaleX(0.992);'>0</span>
<span class="t" style='left:26.60px;top:611.00px;font-size:5.6px;color:#9c9c9c;transform:scaleX(0.992);'>0</span>
<div style="left:34.4px;top:595.4px;width:2px;height:1px;background:#595959;"></div>
<div style="left:34.4px;top:602.6px;width:2px;height:1px;background:#595959;"></div>
<div style="left:34.4px;top:609.7px;width:2px;height:1px;background:#595959;"></div>
<div style="left:26px;top:616.9px;width:10.4px;height:1px;background:#676767;"></div>
<span class="t" style='left:26.60px;top:620.50px;font-size:5.6px;color:#9c9c9c;transform:scaleX(0.992);'>3</span>
<span class="t" style='left:26.60px;top:627.00px;font-size:5.6px;color:#9c9c9c;transform:scaleX(0.992);'>0</span>
<span class="t" style='left:26.60px;top:633.00px;font-size:5.6px;color:#9c9c9c;transform:scaleX(0.992);'>0</span>
<span class="t" style='left:26.60px;top:640.00px;font-size:5.6px;color:#9c9c9c;transform:scaleX(0.992);'>0</span>
<div style="left:34.4px;top:624.1px;width:2px;height:1px;background:#595959;"></div>
<div style="left:34.4px;top:631.2px;width:2px;height:1px;background:#595959;"></div>
<div style="left:34.4px;top:638.4px;width:2px;height:1px;background:#595959;"></div>
<div style="left:26px;top:645.6px;width:10.4px;height:1px;background:#676767;"></div>
<span class="t" style='left:26.60px;top:649.00px;font-size:5.6px;color:#9c9c9c;transform:scaleX(0.992);'>3</span>
<span class="t" style='left:26.60px;top:656.00px;font-size:5.6px;color:#9c9c9c;transform:scaleX(0.992);'>2</span>
<span class="t" style='left:26.60px;top:662.00px;font-size:5.6px;color:#9c9c9c;transform:scaleX(0.992);'>0</span>
<span class="t" style='left:26.60px;top:668.00px;font-size:5.6px;color:#9c9c9c;transform:scaleX(0.992);'>0</span>
<div style="left:34.4px;top:652.8px;width:2px;height:1px;background:#595959;"></div>
<div style="left:34.4px;top:660.0px;width:2px;height:1px;background:#595959;"></div>
<div style="left:34.4px;top:667.1px;width:2px;height:1px;background:#595959;"></div>
<div style="left:26px;top:674.3px;width:10.4px;height:1px;background:#676767;"></div>
<span class="t" style='left:26.60px;top:678.00px;font-size:5.6px;color:#9c9c9c;transform:scaleX(0.992);'>3</span>
<span class="t" style='left:26.60px;top:684.00px;font-size:5.6px;color:#9c9c9c;transform:scaleX(0.992);'>4</span>
<span class="t" style='left:26.60px;top:691.00px;font-size:5.6px;color:#9c9c9c;transform:scaleX(0.992);'>0</span>
<span class="t" style='left:26.60px;top:697.00px;font-size:5.6px;color:#9c9c9c;transform:scaleX(0.992);'>0</span>
<div style="left:34.4px;top:681.5px;width:2px;height:1px;background:#595959;"></div>
<div style="left:34.4px;top:688.6px;width:2px;height:1px;background:#595959;"></div>
<div style="left:34.4px;top:695.8px;width:2px;height:1px;background:#595959;"></div>
<div style="left:26px;top:703.0px;width:10.4px;height:1px;background:#676767;"></div>
<span class="t" style='left:26.60px;top:707.00px;font-size:5.6px;color:#9c9c9c;transform:scaleX(0.992);'>3</span>
<div style="left:34.4px;top:710.2px;width:2px;height:1px;background:#595959;"></div>
<div style="left:25px;top:711px;width:834px;height:9px;background:#4b4b4b;"></div>
<div style="left:25px;top:711px;width:32px;height:9px;background:#444444;"></div>
<span class="t" style='left:30.70px;top:715.50px;font-size:6.8px;color:#e0e0e0;transform:scaleX(0.837);'>20.66%</span>
<span class="t" style='left:71.00px;top:715.50px;font-size:6.8px;color:#d8d8d8;transform:scaleX(0.898);'>2232 px x 2854 px (250 ppi)</span>
<svg style="left:164.5px;top:715px;" width="3" height="5" viewBox="0 0 3 5"><path d="M0.4 0.4 L2.4 2.5 L0.4 4.6" fill="none" stroke="#c8c8c8" stroke-width="0.8"/></svg>
<div style="left:0px;top:48.3px;width:24.2px;height:672px;background:#515151;"></div>
<div style="left:0px;top:41px;width:0.8px;height:679px;background:#414141;"></div>
<div style="left:24.2px;top:41px;width:1px;height:679px;background:#3e3e3e;"></div>
<div style="left:3.2px;top:61.2px;width:18.4px;height:16.2px;background:#363636;border-radius:1.5px;"></div>
<svg style="left:19.2px;top:73.6px;" width="2.2" height="2.2" viewBox="0 0 2.2 2.2"><path d="M2.2 0 L2.2 2.2 L0 2.2 Z" fill="#ababab"/></svg>
<svg style="left:19.2px;top:92px;" width="2.2" height="2.2" viewBox="0 0 2.2 2.2"><path d="M2.2 0 L2.2 2.2 L0 2.2 Z" fill="#ababab"/></svg>
<svg style="left:19.2px;top:110px;" width="2.2" height="2.2" viewBox="0 0 2.2 2.2"><path d="M2.2 0 L2.2 2.2 L0 2.2 Z" fill="#ababab"/></svg>
<svg style="left:19.2px;top:128px;" width="2.2" height="2.2" viewBox="0 0 2.2 2.2"><path d="M2.2 0 L2.2 2.2 L0 2.2 Z" fill="#ababab"/></svg>
<svg style="left:19.2px;top:145.7px;" width="2.2" height="2.2" viewBox="0 0 2.2 2.2"><path d="M2.2 0 L2.2 2.2 L0 2.2 Z" fill="#ababab"/></svg>
<svg style="left:19.2px;top:163.3px;" width="2.2" height="2.2" viewBox="0 0 2.2 2.2"><path d="M2.2 0 L2.2 2.2 L0 2.2 Z" fill="#ababab"/></svg>
<svg style="left:19.2px;top:182.3px;" width="2.2" height="2.2" viewBox="0 0 2.2 2.2"><path d="M2.2 0 L2.2 2.2 L0 2.2 Z" fill="#ababab"/></svg>
<svg style="left:19.2px;top:199.7px;" width="2.2" height="2.2" viewBox="0 0 2.2 2.2"><path d="M2.2 0 L2.2 2.2 L0 2.2 Z" fill="#ababab"/></svg>
<svg style="left:19.2px;top:218.3px;" width="2.2" height="2.2" viewBox="0 0 2.2 2.2"><path d="M2.2 0 L2.2 2.2 L0 2.2 Z" fill="#ababab"/></svg>
<svg style="left:19.2px;top:236.7px;" width="2.2" height="2.2" viewBox="0 0 2.2 2.2"><path d="M2.2 0 L2.2 2.2 L0 2.2 Z" fill="#ababab"/></svg>
<svg style="left:19.2px;top:254px;" width="2.2" height="2.2" viewBox="0 0 2.2 2.2"><path d="M2.2 0 L2.2 2.2 L0 2.2 Z" fill="#ababab"/></svg>
<svg style="left:19.2px;top:272.3px;" width="2.2" height="2.2" viewBox="0 0 2.2 2.2"><path d="M2.2 0 L2.2 2.2 L0 2.2 Z" fill="#ababab"/></svg>
<svg style="left:19.2px;top:290px;" width="2.2" height="2.2" viewBox="0 0 2.2 2.2"><path d="M2.2 0 L2.2 2.2 L0 2.2 Z" fill="#ababab"/></svg>
<svg style="left:19.2px;top:308px;" width="2.2" height="2.2" viewBox="0 0 2.2 2.2"><path d="M2.2 0 L2.2 2.2 L0 2.2 Z" fill="#ababab"/></svg>
<svg style="left:19.2px;top:326.7px;" width="2.2" height="2.2" viewBox="0 0 2.2 2.2"><path d="M2.2 0 L2.2 2.2 L0 2.2 Z" fill="#ababab"/></svg>
<svg style="left:19.2px;top:345px;" width="2.2" height="2.2" viewBox="0 0 2.2 2.2"><path d="M2.2 0 L2.2 2.2 L0 2.2 Z" fill="#ababab"/></svg>
<svg style="left:19.2px;top:363px;" width="2.2" height="2.2" viewBox="0 0 2.2 2.2"><path d="M2.2 0 L2.2 2.2 L0 2.2 Z" fill="#ababab"/></svg>
<svg style="left:19.2px;top:381.3px;" width="2.2" height="2.2" viewBox="0 0 2.2 2.2"><path d="M2.2 0 L2.2 2.2 L0 2.2 Z" fill="#ababab"/></svg>
<svg style="left:19.2px;top:399px;" width="2.2" height="2.2" viewBox="0 0 2.2 2.2"><path d="M2.2 0 L2.2 2.2 L0 2.2 Z" fill="#ababab"/></svg>
<svg style="left:19.2px;top:417.3px;" width="2.2" height="2.2" viewBox="0 0 2.2 2.2"><path d="M2.2 0 L2.2 2.2 L0 2.2 Z" fill="#ababab"/></svg>
<svg style="left:19.2px;top:435.7px;" width="2.2" height="2.2" viewBox="0 0 2.2 2.2"><path d="M2.2 0 L2.2 2.2 L0 2.2 Z" fill="#ababab"/></svg>
<svg style="left:8.2px;top:64.8px;" width="9.6" height="9.6" viewBox="0 0 10 10"><path d="M5 0 L6.5 1.9 L5.45 1.9 L5.45 4.55 L8.1 4.55 L8.1 3.5 L10 5 L8.1 6.5 L8.1 5.45 L5.45 5.45 L5.45 8.1 L6.5 8.1 L5 10 L3.5 8.1 L4.55 8.1 L4.55 5.45 L1.9 5.45 L1.9 6.5 L0 5 L1.9 3.5 L1.9 4.55 L4.55 4.55 L4.55 1.9 L3.5 1.9 Z" fill="#f0f0f0"/></svg>
<svg style="left:7.6px;top:83.5px;" width="10.8" height="9.0" viewBox="0 0 12 10"><rect x="0.6" y="0.6" width="10.8" height="8.8" fill="none" stroke="#dcdcdc" stroke-width="1.2" stroke-dasharray="2.2 1.4"/></svg>
<svg style="left:7.6px;top:100.6px;" width="10.8" height="10.8" viewBox="0 0 12 12"><path d="M1 1 L6 4.2 L10.6 0.8 L9 9 L3.6 7.2 L1 11.2 M3.6 7.2 L1 1" fill="none" stroke="#dcdcdc" stroke-width="1.1" stroke-linejoin="round"/></svg>
<svg style="left:7.6px;top:118.6px;" width="10.8" height="10.8" viewBox="0 0 12 12"><path d="M0.6 6.5 L0.6 0.6 L6.5 0.6" fill="none" stroke="#dcdcdc" stroke-width="1.1" stroke-dasharray="1.6 1"/><rect x="2.6" y="2.6" width="4.6" height="4.6" fill="#dcdcdc"/><path d="M6.2 5.6 L11.2 8.6 L9 9.1 L10.2 11.3 L9.2 11.8 L8 9.6 L6.6 11 Z" fill="#dcdcdc" stroke="#535353" stroke-width="0.4"/></svg>
<svg style="left:7.6px;top:136.3px;" width="10.8" height="10.8" viewBox="0 0 12 12"><path d="M2.8 0 L2.8 9.2 L12 9.2 M0 2.8 L9.2 2.8 L9.2 12" fill="none" stroke="#dcdcdc" stroke-width="1.3"/></svg>
<svg style="left:7.83px;top:154.35px;" width="10.35" height="9.9" viewBox="0 0 11.5 11"><rect x="0.6" y="0.6" width="10.3" height="9.8" fill="none" stroke="#dcdcdc" stroke-width="1.2"/><path d="M0.6 0.6 L10.9 10.4 M10.9 0.6 L0.6 10.4" stroke="#dcdcdc" stroke-width="0.9"/></svg>
<svg style="left:7.6px;top:172.9px;" width="10.8" height="10.8" viewBox="0 0 12 12"><path d="M0.5 11.5 L1 9.3 L6.4 3.9 L8.1 5.6 L2.7 11 Z" fill="#dcdcdc"/><path d="M6 2.6 L9.4 6 M7.6 4.4 L9.2 2.8 A1.3 1.3 0 0 1 11 1 A1.3 1.3 0 0 1 9.2 2.8" stroke="#dcdcdc" stroke-width="1.9" stroke-linecap="round" fill="none"/></svg>
<svg style="left:7.6px;top:190.3px;" width="10.8" height="10.8" viewBox="0 0 12 12"><g transform="rotate(-45 6 6)"><rect x="-0.6" y="3.2" width="13.2" height="5.6" rx="2.4" fill="#dcdcdc"/><rect x="4.1" y="3.2" width="3.8" height="5.6" fill="#535353" opacity="0.55"/><circle cx="5.2" cy="5" r="0.45" fill="#dcdcdc"/><circle cx="6.8" cy="5" r="0.45" fill="#dcdcdc"/><circle cx="5.2" cy="7" r="0.45" fill="#dcdcdc"/><circle cx="6.8" cy="7" r="0.45" fill="#dcdcdc"/></g></svg>
<svg style="left:7.6px;top:208.9px;" width="10.8" height="10.8" viewBox="0 0 12 12"><path d="M11.4 0.4 L12 1 L5.8 8.2 L4.2 6.6 Z" fill="#dcdcdc"/><path d="M3.6 7.2 L5.2 8.8 C4.8 10.8 2.6 11.6 0.4 11.4 C1.6 10.4 1.6 8 3.6 7.2 Z" fill="#dcdcdc"/></svg>
<svg style="left:7.6px;top:227.52px;" width="10.8" height="10.35" viewBox="0 0 12 11.5"><path d="M4.1 0.6 A1.9 2.2 0 0 1 7.9 0.6 C8.3 2.6 7 3.6 7 5.4 L10.6 5.4 Q11.4 5.4 11.4 6.2 L11.4 8.4 L0.6 8.4 L0.6 6.2 Q0.6 5.4 1.4 5.4 L5 5.4 C5 3.6 3.7 2.6 4.1 0.6 Z" fill="#dcdcdc"/><rect x="0.6" y="9.6" width="10.8" height="1.5" fill="#dcdcdc"/></svg>
<svg style="left:7.6px;top:244.82px;" width="10.8" height="10.35" viewBox="0 0 12 11.5"><path d="M11.4 0.6 L12 1.2 L7 7.6 L5.6 6.2 Z" fill="#dcdcdc"/><path d="M5 6.8 L6.4 8.2 C6 10 4.2 10.8 2.2 10.6 C3.2 9.8 3.2 7.6 5 6.8 Z" fill="#dcdcdc"/><path d="M0.6 4.6 A3.6 3.6 0 0 1 7.2 2.4" fill="none" stroke="#dcdcdc" stroke-width="1"/><path d="M0 2.6 L0.6 5.4 L2.8 4 Z" fill="#dcdcdc"/></svg>
<svg style="left:7.6px;top:263.35px;" width="10.8" height="9.9" viewBox="0 0 12 11"><path d="M7.2 0.8 L11.6 5.2 L6.4 10.4 L3 10.4 L0.8 8.2 Z" fill="none" stroke="#dcdcdc" stroke-width="1.1" stroke-linejoin="round"/><path d="M4 4 L8.4 8.4 L6.4 10.4 L3 10.4 L0.8 8.2 Z" fill="#dcdcdc"/><path d="M6 10.4 L11.6 10.4" stroke="#dcdcdc" stroke-width="1"/></svg>
<svg style="left:7.78px;top:281.23px;" width="10.44" height="9.54" viewBox="0 0 11.6 10.6"><defs><linearGradient id="gr1" x1="0" x2="1"><stop offset="0" stop-color="#f2f2f2"/><stop offset="1" stop-color="#5a5a5a"/></linearGradient></defs><rect x="0.5" y="0.5" width="10.6" height="9.6" fill="url(#gr1)" stroke="#dcdcdc" stroke-width="1"/></svg>
<svg style="left:9.4px;top:298.78px;" width="7.2" height="10.44" viewBox="0 0 8 11.6"><path d="M4 0 C5.2 3 8 5 8 7.6 A4 4 0 0 1 0 7.6 C0 5 2.8 3 4 0 Z" fill="#dcdcdc"/></svg>
<svg style="left:7.83px;top:317.3px;" width="10.35" height="10.8" viewBox="0 0 11.5 12"><circle cx="7.4" cy="4.2" r="3.5" fill="#dcdcdc"/><path d="M5 6.8 L0.8 11.2" stroke="#dcdcdc" stroke-width="2" stroke-linecap="round"/></svg>
<svg style="left:7.6px;top:335.6px;" width="10.8" height="10.8" viewBox="0 0 12 12"><path d="M6.6 0.6 L11.4 5.4 L9.6 6.2 L8 10 L1 11 L2 4 L5.8 2.4 Z" fill="none" stroke="#dcdcdc" stroke-width="1.1" stroke-linejoin="round"/><circle cx="5.6" cy="6.4" r="1.1" fill="#dcdcdc"/><path d="M1 11 L4.8 7.2" stroke="#dcdcdc" stroke-width="0.9"/></svg>
<span class="t" style='left:8.70px;top:353.00px;font-size:12.6px;color:#e2e2e2;font-family:"Liberation Serif", serif;font-weight:bold;transform:scaleX(1.023);'>T</span>
<svg style="left:9.13px;top:371.9px;" width="7.74" height="10.8" viewBox="0 0 8.6 12"><path d="M0.4 0 L0.4 10.4 L3 8 L4.8 12 L6.6 11.2 L4.8 7.4 L8.2 7.2 Z" fill="#dcdcdc"/></svg>
<svg style="left:7.6px;top:390.5px;" width="10.8" height="9.0" viewBox="0 0 12 10"><rect x="0.7" y="0.7" width="10.6" height="8.6" fill="#7b7b7b" stroke="#dcdcdc" stroke-width="1.3"/></svg>
<svg style="left:8.27px;top:407.9px;" width="9.45" height="10.8" viewBox="0 0 10.5 12"><path d="M3 6.4 L3 2.2 A0.8 0.8 0 0 1 4.6 2.2 L4.6 1.2 A0.8 0.8 0 0 1 6.2 1.2 L6.2 1.8 A0.8 0.8 0 0 1 7.8 1.8 L7.8 3 A0.8 0.8 0 0 1 9.4 3 L9.4 8 C9.4 10.4 8 11.6 6 11.6 C4.2 11.6 3.4 10.8 2.2 9 L0.6 6.6 C0.4 5.8 1.4 5.2 2 6 Z" fill="#dcdcdc"/><path d="M1.2 2.6 A5 5 0 0 1 9.8 1.6" fill="none" stroke="#dcdcdc" stroke-width="0.8" stroke-dasharray="1.2 0.9"/></svg>
<svg style="left:7.6px;top:426.3px;" width="10.8" height="10.8" viewBox="0 0 12 12"><circle cx="4.6" cy="4.6" r="3.7" fill="none" stroke="#dcdcdc" stroke-width="1.4"/><path d="M7.4 7.4 L11 11" stroke="#dcdcdc" stroke-width="2" stroke-linecap="round"/></svg>
<div style="left:8.0px;top:448px;width:2.3px;height:2.3px;background:#e4e4e4;border-radius:50%;"></div>
<div style="left:11.7px;top:448px;width:2.3px;height:2.3px;background:#e4e4e4;border-radius:50%;"></div>
<div style="left:15.4px;top:448px;width:2.3px;height:2.3px;background:#e4e4e4;border-radius:50%;"></div>
<div style="left:3.6px;top:462.8px;width:3.6px;height:3.6px;background:#1c1c1c;outline:0.6px solid #d8d8d8;"></div>
<div style="left:5.4px;top:464.6px;width:3.4px;height:3.4px;background:#f4f4f4;outline:0.5px solid #333;"></div>
<svg style="left:13.5px;top:461.5px;" width="7" height="7" viewBox="0 0 7 7"><path d="M1.6 1.6 L5.4 1.6 L5.4 5.4" fill="none" stroke="#d4d4d4" stroke-width="0.9"/><path d="M0 1.6 L2 0 L2 3.2 Z M5.4 7 L3.8 5 L7 5 Z" fill="#d4d4d4"/></svg>
<div style="left:9.4px;top:480px;width:11.4px;height:12.6px;background:#ffffff;outline:1px solid #2e2e2e;"></div>
<div style="left:3.2px;top:474px;width:10.8px;height:11.9px;background:#ffffff;outline:1px solid #2e2e2e;"></div>
<svg style="left:7.2px;top:499.7px;" width="11.2" height="10.4" viewBox="0 0 11.2 10.4"><rect x="0.55" y="0.55" width="10.1" height="9.3" fill="none" stroke="#cfcfcf" stroke-width="1.1"/><ellipse cx="5.6" cy="5.2" rx="2.7" ry="2.5" fill="none" stroke="#cfcfcf" stroke-width="0.9" stroke-dasharray="1.1 0.8"/></svg>
<svg style="left:6.8px;top:518.6px;" width="11.6" height="10.6" viewBox="0 0 11.6 10.6"><rect x="3.2" y="0.55" width="7.8" height="6.4" fill="none" stroke="#cfcfcf" stroke-width="1.1"/><rect x="0.55" y="3.2" width="7.8" height="6.6" fill="#535353" stroke="#cfcfcf" stroke-width="1.1"/></svg>
<svg style="left:19.3px;top:528.3px;" width="2.4" height="2.4" viewBox="0 0 2.4 2.4"><path d="M2.4 0 L2.4 2.4 L0 2.4 Z" fill="#bdbdbd"/></svg>
<div style="left:303.5px;top:186.8px;width:289.2px;height:411px;background:repeating-conic-gradient(#ffffff 0% 25%, #cbcbcb 0% 50%) 0 0/10px 10.37px;"></div>
<div style="left:37px;top:210.2px;width:822px;height:1.3px;background:rgba(58,222,202,0.76);"></div>
<div style="left:37px;top:574.3px;width:822px;height:1.3px;background:rgba(58,222,202,0.76);"></div>
<div style="left:322.7px;top:73px;width:1.3px;height:638px;background:rgba(58,222,202,0.76);"></div>
<div style="left:572.2px;top:73px;width:1.3px;height:638px;background:rgba(58,222,202,0.76);"></div>
<div style="left:351px;top:136px;width:378px;height:447.8px;background:#ffffff;"></div>
<svg style="left:371.8px;top:144.1px;" width="26.2" height="26.3" viewBox="0 0 26.2 26.3"><defs><clipPath id="lg"><rect x="0" y="0" width="26.2" height="26.3" rx="5.2"/></clipPath></defs><g clip-path="url(#lg)"><rect width="26.2" height="26.3" fill="#ffffff"/><rect width="26.2" height="10.7" fill="#233e8c"/><rect x="1.2" y="10.7" width="8.4" height="6.4" fill="#f5bd9a"/><rect x="13" y="12" width="4.2" height="3.8" fill="#e9824a"/><rect x="0" y="24.4" width="26.2" height="2" fill="#e9824a"/><path d="M4 25 L12.6 13.2 L15.4 13.2 L23.2 25 L19.4 25 L17.6 21.6 L10 21.6 L7.8 25 Z M11.4 19.4 L16.4 19.4 L14 15.6 Z" fill="#233e8c"/><text x="3" y="10.2" font-family="Liberation Serif, serif" font-weight="bold" font-size="15.8" fill="#ffffff" textLength="19.8" lengthAdjust="spacingAndGlyphs">my</text></g><rect x="0.45" y="0.45" width="25.3" height="25.4" rx="4.9" fill="none" stroke="#233e8c" stroke-width="0.9"/></svg>
<span class="t" style='left:398.20px;top:146.50px;font-size:24px;color:#e9824a;font-family:"Liberation Serif", serif;transform:scaleX(0.893);-webkit-text-stroke:0.45px #e9824a;'>my</span>
<span class="t" style='left:426.20px;top:156.00px;font-size:12px;color:#2b3f7c;transform:scaleX(1.331);-webkit-text-stroke:0.4px #2b3f7c;'>ABL</span>
<span class="t" style='left:370.20px;top:177.00px;font-size:7.5px;color:#0c0c0c;font-family:"DejaVu Sans Condensed", "DejaVu Sans", sans-serif;transform:scaleX(1.043);-webkit-text-stroke:0.22px #0c0c0c;'>Account Number: 1086001009566890014</span>
<span class="t" style='left:370.20px;top:186.00px;font-size:7.5px;color:#0c0c0c;font-family:"DejaVu Sans Condensed", "DejaVu Sans", sans-serif;transform:scaleX(1.077);-webkit-text-stroke:0.22px #0c0c0c;'>Account Title: JOHN CITIZEN</span>
<span class="t" style='left:370.20px;top:195.00px;font-size:7.5px;color:#0c0c0c;font-family:"DejaVu Sans Condensed", "DejaVu Sans", sans-serif;transform:scaleX(1.054);-webkit-text-stroke:0.22px #0c0c0c;'>Currency: PKR</span>
<span class="t" style='left:370.20px;top:204.00px;font-size:7.5px;color:#0c0c0c;font-family:"DejaVu Sans Condensed", "DejaVu Sans", sans-serif;transform:scaleX(1.014);-webkit-text-stroke:0.22px #0c0c0c;'>Opening Balance: 0.00</span>
<span class="t" style='left:370.20px;top:213.00px;font-size:7.5px;color:#0c0c0c;font-family:"DejaVu Sans Condensed", "DejaVu Sans", sans-serif;transform:scaleX(1.006);-webkit-text-stroke:0.22px #0c0c0c;'>Closing Balance: 4.40</span>
<span class="t" style='left:370.60px;top:226.00px;font-size:8.3px;color:#0a0a0a;font-weight:bold;transform:scaleX(1.098);-webkit-text-stroke:0.25px #0a0a0a;'>*Note: Posted Transactions until the last working day are shown</span>
<div style="left:369.8px;top:234.5px;width:348.5px;height:14.1px;background:#397ab9;"></div>
<span class="t" style='left:374.30px;top:240.00px;font-size:6.9px;color:#ffffff;font-weight:bold;-webkit-text-stroke:0.2px #fff;'>Account Statement</span>
<div style="left:369.8px;top:267.5px;width:348.5px;height:2.1px;background:#336ba4;"></div>
<span class="t" style='left:374.70px;top:276.00px;font-size:5.3px;color:#242424;font-family:"DejaVu Sans Condensed", "DejaVu Sans", sans-serif;transform:scaleX(0.927);-webkit-text-stroke:0.07px #242424;'>30 May 2025</span>
<span class="t" style='left:423.60px;top:276.00px;font-size:5.3px;color:#242424;font-family:"DejaVu Sans Condensed", "DejaVu Sans", sans-serif;transform:scaleX(0.927);-webkit-text-stroke:0.07px #242424;'>Cash Deposit</span>
<span class="t" style='left:634.35px;top:276.00px;font-size:5.3px;color:#242424;font-family:"DejaVu Sans Condensed", "DejaVu Sans", sans-serif;transform:scaleX(0.921);-webkit-text-stroke:0.07px #242424;'>500.00</span>
<span class="t" style='left:696.55px;top:276.00px;font-size:5.3px;color:#242424;font-family:"DejaVu Sans Condensed", "DejaVu Sans", sans-serif;transform:scaleX(0.921);-webkit-text-stroke:0.07px #242424;'>500.00</span>
<span class="t" style='left:374.70px;top:294.99px;font-size:5.3px;color:#242424;font-family:"DejaVu Sans Condensed", "DejaVu Sans", sans-serif;transform:scaleX(0.927);-webkit-text-stroke:0.07px #242424;'>30 May 2025</span>
<span class="t" style='left:423.60px;top:294.99px;font-size:5.3px;color:#242424;font-family:"DejaVu Sans Condensed", "DejaVu Sans", sans-serif;transform:scaleX(0.948);-webkit-text-stroke:0.07px #242424;'>Cheque Book Charges</span>
<span class="t" style='left:571.85px;top:294.99px;font-size:5.3px;color:#242424;font-family:"DejaVu Sans Condensed", "DejaVu Sans", sans-serif;transform:scaleX(0.921);-webkit-text-stroke:0.07px #242424;'>120.00</span>
<span class="t" style='left:696.55px;top:294.99px;font-size:5.3px;color:#242424;font-family:"DejaVu Sans Condensed", "DejaVu Sans", sans-serif;transform:scaleX(0.921);-webkit-text-stroke:0.07px #242424;'>380.00</span>
<span class="t" style='left:374.70px;top:314.02px;font-size:5.3px;color:#242424;font-family:"DejaVu Sans Condensed", "DejaVu Sans", sans-serif;transform:scaleX(0.927);-webkit-text-stroke:0.07px #242424;'>30 May 2025</span>
<span class="t" style='left:423.60px;top:314.02px;font-size:5.3px;color:#242424;font-family:"DejaVu Sans Condensed", "DejaVu Sans", sans-serif;transform:scaleX(0.920);-webkit-text-stroke:0.07px #242424;'>FED Deduction</span>
<span class="t" style='left:574.63px;top:314.02px;font-size:5.3px;color:#242424;font-family:"DejaVu Sans Condensed", "DejaVu Sans", sans-serif;transform:scaleX(0.922);-webkit-text-stroke:0.07px #242424;'>15.60</span>
<span class="t" style='left:696.55px;top:314.02px;font-size:5.3px;color:#242424;font-family:"DejaVu Sans Condensed", "DejaVu Sans", sans-serif;transform:scaleX(0.921);-webkit-text-stroke:0.07px #242424;'>364.40</span>
<span class="t" style='left:374.70px;top:333.00px;font-size:5.3px;color:#242424;font-family:"DejaVu Sans Condensed", "DejaVu Sans", sans-serif;transform:scaleX(0.963);-webkit-text-stroke:0.07px #242424;'>04 Jun 2025</span>
<span class="t" style='left:423.60px;top:333.00px;font-size:5.3px;color:#242424;font-family:"DejaVu Sans Condensed", "DejaVu Sans", sans-serif;transform:scaleX(0.964);-webkit-text-stroke:0.07px #242424;'>FED Deduction AC-PL52714</span>
<span class="t" style='left:577.41px;top:333.00px;font-size:5.3px;color:#242424;font-family:"DejaVu Sans Condensed", "DejaVu Sans", sans-serif;transform:scaleX(0.923);-webkit-text-stroke:0.07px #242424;'>9.75</span>
<span class="t" style='left:696.55px;top:333.00px;font-size:5.3px;color:#242424;font-family:"DejaVu Sans Condensed", "DejaVu Sans", sans-serif;transform:scaleX(0.921);-webkit-text-stroke:0.07px #242424;'>354.65</span>
<span class="t" style='left:374.70px;top:351.99px;font-size:5.3px;color:#242424;font-family:"DejaVu Sans Condensed", "DejaVu Sans", sans-serif;transform:scaleX(0.963);-webkit-text-stroke:0.07px #242424;'>04 Jun 2025</span>
<span class="t" style='left:423.60px;top:351.99px;font-size:5.3px;color:#242424;font-family:"DejaVu Sans Condensed", "DejaVu Sans", sans-serif;transform:scaleX(0.922);-webkit-text-stroke:0.07px #242424;'>Service Charges</span>
<span class="t" style='left:574.63px;top:351.99px;font-size:5.3px;color:#242424;font-family:"DejaVu Sans Condensed", "DejaVu Sans", sans-serif;transform:scaleX(0.922);-webkit-text-stroke:0.07px #242424;'>75.00</span>
<span class="t" style='left:696.55px;top:351.99px;font-size:5.3px;color:#242424;font-family:"DejaVu Sans Condensed", "DejaVu Sans", sans-serif;transform:scaleX(0.921);-webkit-text-stroke:0.07px #242424;'>279.65</span>
<span class="t" style='left:374.70px;top:370.98px;font-size:5.3px;color:#242424;font-family:"DejaVu Sans Condensed", "DejaVu Sans", sans-serif;transform:scaleX(0.963);-webkit-text-stroke:0.07px #242424;'>04 Jun 2025</span>
<span class="t" style='left:423.60px;top:370.98px;font-size:5.3px;color:#242424;font-family:"DejaVu Sans Condensed", "DejaVu Sans", sans-serif;transform:scaleX(0.964);-webkit-text-stroke:0.07px #242424;'>FED Deduction AC-PL52714</span>
<span class="t" style='left:577.41px;top:370.98px;font-size:5.3px;color:#242424;font-family:"DejaVu Sans Condensed", "DejaVu Sans", sans-serif;transform:scaleX(0.923);-webkit-text-stroke:0.07px #242424;'>9.75</span>
<span class="t" style='left:696.55px;top:370.98px;font-size:5.3px;color:#242424;font-family:"DejaVu Sans Condensed", "DejaVu Sans", sans-serif;transform:scaleX(0.921);-webkit-text-stroke:0.07px #242424;'>269.90</span>
<span class="t" style='left:374.70px;top:389.01px;font-size:5.3px;color:#242424;font-family:"DejaVu Sans Condensed", "DejaVu Sans", sans-serif;transform:scaleX(0.963);-webkit-text-stroke:0.07px #242424;'>04 Jun 2025</span>
<span class="t" style='left:423.60px;top:389.01px;font-size:5.3px;color:#242424;font-family:"DejaVu Sans Condensed", "DejaVu Sans", sans-serif;transform:scaleX(0.922);-webkit-text-stroke:0.07px #242424;'>Service Charges</span>
<span class="t" style='left:574.63px;top:389.01px;font-size:5.3px;color:#242424;font-family:"DejaVu Sans Condensed", "DejaVu Sans", sans-serif;transform:scaleX(0.922);-webkit-text-stroke:0.07px #242424;'>75.00</span>
<span class="t" style='left:696.55px;top:389.01px;font-size:5.3px;color:#242424;font-family:"DejaVu Sans Condensed", "DejaVu Sans", sans-serif;transform:scaleX(0.921);-webkit-text-stroke:0.07px #242424;'>194.90</span>
<span class="t" style='left:374.70px;top:408.00px;font-size:5.3px;color:#242424;font-family:"DejaVu Sans Condensed", "DejaVu Sans", sans-serif;transform:scaleX(0.963);-webkit-text-stroke:0.07px #242424;'>23 Jun 2025</span>
<span class="t" style='left:423.60px;top:408.00px;font-size:5.3px;color:#242424;font-family:"DejaVu Sans Condensed", "DejaVu Sans", sans-serif;transform:scaleX(1.006);-webkit-text-stroke:0.07px #242424;'>Transfer</span>
<span class="t" style='left:627.34px;top:408.00px;font-size:5.3px;color:#242424;font-family:"DejaVu Sans Condensed", "DejaVu Sans", sans-serif;transform:scaleX(0.922);-webkit-text-stroke:0.07px #242424;'>47,640.00</span>
<span class="t" style='left:689.54px;top:408.00px;font-size:5.3px;color:#242424;font-family:"DejaVu Sans Condensed", "DejaVu Sans", sans-serif;transform:scaleX(0.922);-webkit-text-stroke:0.07px #242424;'>47,834.90</span>
<span class="t" style='left:374.70px;top:426.98px;font-size:5.3px;color:#242424;font-family:"DejaVu Sans Condensed", "DejaVu Sans", sans-serif;transform:scaleX(0.963);-webkit-text-stroke:0.07px #242424;'>23 Jun 2025</span>
<span class="t" style='left:423.60px;top:426.98px;font-size:5.3px;color:#242424;font-family:"DejaVu Sans Condensed", "DejaVu Sans", sans-serif;transform:scaleX(0.956);-webkit-text-stroke:0.07px #242424;'>Cash Withdrawal 52483352</span>
<span class="t" style='left:564.84px;top:426.98px;font-size:5.3px;color:#242424;font-family:"DejaVu Sans Condensed", "DejaVu Sans", sans-serif;transform:scaleX(0.922);-webkit-text-stroke:0.07px #242424;'>45,000.00</span>
<span class="t" style='left:692.32px;top:426.98px;font-size:5.3px;color:#242424;font-family:"DejaVu Sans Condensed", "DejaVu Sans", sans-serif;transform:scaleX(0.923);-webkit-text-stroke:0.07px #242424;'>2,834.90</span>
<span class="t" style='left:374.70px;top:446.01px;font-size:5.3px;color:#242424;font-family:"DejaVu Sans Condensed", "DejaVu Sans", sans-serif;transform:scaleX(0.963);-webkit-text-stroke:0.07px #242424;'>23 Jun 2025</span>
<span class="t" style='left:423.60px;top:446.01px;font-size:5.3px;color:#242424;font-family:"DejaVu Sans Condensed", "DejaVu Sans", sans-serif;transform:scaleX(0.967);-webkit-text-stroke:0.07px #242424;'>Debit Card Issuance Fee</span>
<span class="t" style='left:567.62px;top:446.01px;font-size:5.3px;color:#242424;font-family:"DejaVu Sans Condensed", "DejaVu Sans", sans-serif;transform:scaleX(0.923);-webkit-text-stroke:0.07px #242424;'>1,100.00</span>
<span class="t" style='left:692.32px;top:446.01px;font-size:5.3px;color:#242424;font-family:"DejaVu Sans Condensed", "DejaVu Sans", sans-serif;transform:scaleX(0.923);-webkit-text-stroke:0.07px #242424;'>1,734.90</span>
<span class="t" style='left:374.70px;top:465.00px;font-size:5.3px;color:#242424;font-family:"DejaVu Sans Condensed", "DejaVu Sans", sans-serif;transform:scaleX(0.963);-webkit-text-stroke:0.07px #242424;'>23 Jun 2025</span>
<span class="t" style='left:423.60px;top:465.00px;font-size:5.3px;color:#242424;font-family:"DejaVu Sans Condensed", "DejaVu Sans", sans-serif;transform:scaleX(0.961);-webkit-text-stroke:0.07px #242424;'>FED on Debit Card Fee AC-PL52736</span>
<span class="t" style='left:571.85px;top:465.00px;font-size:5.3px;color:#242424;font-family:"DejaVu Sans Condensed", "DejaVu Sans", sans-serif;transform:scaleX(0.921);-webkit-text-stroke:0.07px #242424;'>143.00</span>
<span class="t" style='left:692.32px;top:465.00px;font-size:5.3px;color:#242424;font-family:"DejaVu Sans Condensed", "DejaVu Sans", sans-serif;transform:scaleX(0.923);-webkit-text-stroke:0.07px #242424;'>1,591.90</span>
<span class="t" style='left:374.70px;top:483.99px;font-size:5.3px;color:#242424;font-family:"DejaVu Sans Condensed", "DejaVu Sans", sans-serif;transform:scaleX(0.963);-webkit-text-stroke:0.07px #242424;'>24 Jun 2025</span>
<span class="t" style='left:423.60px;top:483.99px;font-size:5.3px;color:#242424;font-family:"DejaVu Sans Condensed", "DejaVu Sans", sans-serif;transform:scaleX(0.956);-webkit-text-stroke:0.07px #242424;'>Cash Withdrawal 52483353</span>
<span class="t" style='left:567.62px;top:483.99px;font-size:5.3px;color:#242424;font-family:"DejaVu Sans Condensed", "DejaVu Sans", sans-serif;transform:scaleX(0.923);-webkit-text-stroke:0.07px #242424;'>1,000.00</span>
<span class="t" style='left:696.55px;top:483.99px;font-size:5.3px;color:#242424;font-family:"DejaVu Sans Condensed", "DejaVu Sans", sans-serif;transform:scaleX(0.921);-webkit-text-stroke:0.07px #242424;'>591.90</span>
<span class="t" style='left:374.70px;top:503.02px;font-size:5.3px;color:#242424;font-family:"DejaVu Sans Condensed", "DejaVu Sans", sans-serif;transform:scaleX(0.949);-webkit-text-stroke:0.07px #242424;'>02 Jul 2025</span>
<span class="t" style='left:423.60px;top:503.02px;font-size:5.3px;color:#242424;font-family:"DejaVu Sans Condensed", "DejaVu Sans", sans-serif;transform:scaleX(0.964);-webkit-text-stroke:0.07px #242424;'>FED Deduction AC-PL52714</span>
<span class="t" style='left:577.41px;top:503.02px;font-size:5.3px;color:#242424;font-family:"DejaVu Sans Condensed", "DejaVu Sans", sans-serif;transform:scaleX(0.923);-webkit-text-stroke:0.07px #242424;'>9.75</span>
<span class="t" style='left:696.55px;top:503.02px;font-size:5.3px;color:#242424;font-family:"DejaVu Sans Condensed", "DejaVu Sans", sans-serif;transform:scaleX(0.921);-webkit-text-stroke:0.07px #242424;'>582.15</span>
<span class="t" style='left:374.70px;top:522.00px;font-size:5.3px;color:#242424;font-family:"DejaVu Sans Condensed", "DejaVu Sans", sans-serif;transform:scaleX(0.949);-webkit-text-stroke:0.07px #242424;'>02 Jul 2025</span>
<span class="t" style='left:423.60px;top:522.00px;font-size:5.3px;color:#242424;font-family:"DejaVu Sans Condensed", "DejaVu Sans", sans-serif;transform:scaleX(0.922);-webkit-text-stroke:0.07px #242424;'>Service Charges</span>
<span class="t" style='left:574.63px;top:522.00px;font-size:5.3px;color:#242424;font-family:"DejaVu Sans Condensed", "DejaVu Sans", sans-serif;transform:scaleX(0.922);-webkit-text-stroke:0.07px #242424;'>75.00</span>
<span class="t" style='left:696.55px;top:522.00px;font-size:5.3px;color:#242424;font-family:"DejaVu Sans Condensed", "DejaVu Sans", sans-serif;transform:scaleX(0.921);-webkit-text-stroke:0.07px #242424;'>507.15</span>
<div style="left:373.3px;top:552.9px;width:330.5px;height:0.9px;background:#9a9a9a;"></div>
<div style="left:370px;top:561.7px;width:7.5px;height:7.1px;background:#d4d4d4;"></div>
<span class="t" style='left:372.60px;top:563.00px;font-size:5px;color:#555;font-family:"DejaVu Sans Condensed", "DejaVu Sans", sans-serif;'>1</span>
<span class="t" style='left:385.00px;top:563.00px;font-size:5.2px;color:#2a2a2a;font-family:"DejaVu Sans Condensed", "DejaVu Sans", sans-serif;transform:scaleX(0.941);-webkit-text-stroke:0.12px #2a2a2a;'>07 Sep 2025, 20:34</span>
<div style="left:870.8px;top:41px;width:24.4px;height:7.3px;background:#404040;"></div>
<div style="left:870.8px;top:48.3px;width:24.4px;height:672px;background:#535353;"></div>
<div style="left:895.2px;top:41px;width:1px;height:679px;background:#3b3b3b;"></div>
<svg style="left:886px;top:42.9px;" width="5" height="3.4" viewBox="0 0 5 3.4"><path d="M1.9 0.2 L0.3 1.7 L1.9 3.2 M4.3 0.2 L2.7 1.7 L4.3 3.2" fill="none" stroke="#e4e4e4" stroke-width="1.1"/></svg>
<div style="left:871.5px;top:96.5px;width:23px;height:1.4px;background:#454545;"></div>
<div style="left:871.5px;top:144.8px;width:23px;height:1.4px;background:#454545;"></div>
<div style="left:871.5px;top:173.5px;width:23px;height:1.4px;background:#454545;"></div>
<div style="left:871.5px;top:201.8px;width:23px;height:1.4px;background:#454545;"></div>
<svg style="left:875.5px;top:58.6px;" width="14.2" height="12.6" viewBox="0 0 14.2 12.6"><path d="M0 0.6 H5.4 M0 2.6 H4.4 M0 4.6 H3.4 M0 6.6 H2.4" stroke="#e2e2e2" stroke-width="0.9"/><path d="M13.4 1.2 L14 1.8 L8 8.6 L6.6 7.2 Z" fill="#e2e2e2"/><path d="M6 7.8 L7.4 9.2 C7 11.2 5 12.2 2.8 12 C4 11 4 8.6 6 7.8 Z" fill="#e2e2e2"/></svg>
<svg style="left:876px;top:78.6px;" width="13.4" height="11.6" viewBox="0 0 13.4 11.6"><path d="M0 2.4 H10.6 M0 8 H6.4" stroke="#e2e2e2" stroke-width="1.2"/><circle cx="3.2" cy="2.4" r="2.1" fill="#e2e2e2"/><path d="M6.6 8 L11.6 4.6 L12.2 5 C13 7 13 9 12.2 11 L11.6 11.4 Z" fill="#e2e2e2"/></svg>
<span class="t" style='left:878.40px;top:106.50px;font-size:13.2px;color:#ececec;transform:scaleX(0.864);'>A</span>
<div style="left:887.3px;top:107.2px;width:1px;height:11.4px;background:#ececec;"></div>
<svg style="left:879.4px;top:127px;" width="8.6" height="11.8" viewBox="0 0 8.6 11.8"><path d="M8.6 0 H3.6 A3.3 3.3 0 0 0 3.6 6.6 H4.4 V11.8 H5.6 V1.1 H6.6 V11.8 H7.8 V1.1 H8.6 Z" fill="#ececec"/></svg>
<span class="t" style='left:877.60px;top:154.00px;font-size:14.5px;color:#ececec;font-family:"Liberation Serif", serif;font-weight:bold;font-style:italic;transform:scaleX(1.096);'>A</span>
<svg style="left:877px;top:183.6px;" width="12" height="12.8" viewBox="0 0 12 12.8"><path d="M6 0.6 L11.4 3.4 L11.4 9.4 L6 12.2 L0.6 9.4 L0.6 3.4 Z M0.6 3.4 L6 6.2 L11.4 3.4 M6 6.2 L6 12.2" fill="none" stroke="#b8b8b8" stroke-width="1.1" stroke-linejoin="round"/><path d="M6 6.2 L11.4 3.4 L11.4 9.4 L6 12.2 Z" fill="#8a8a8a"/></svg>
<div style="left:896.2px;top:41px;width:184px;height:7.3px;background:#404040;"></div>
<svg style="left:1066px;top:42.9px;" width="5" height="3.4" viewBox="0 0 5 3.4"><path d="M0.3 0.2 L1.9 1.7 L0.3 3.2 M2.7 0.2 L4.3 1.7 L2.7 3.2" fill="none" stroke="#e4e4e4" stroke-width="1.1"/></svg>
<div style="left:896.2px;top:48.3px;width:184px;height:18.7px;background:#424242;"></div>
<div style="left:896.2px;top:67px;width:184px;height:318.5px;background:#535353;"></div>
<div style="left:1010px;top:48.3px;width:39.5px;height:19px;background:#535353;"></div>
<span class="t" style='left:901.20px;top:54.50px;font-size:7.4px;color:#a9a9a9;font-weight:bold;transform:scaleX(0.814);'>Swatc</span>
<span class="t" style='left:924.00px;top:54.50px;font-size:7.4px;color:#a9a9a9;font-weight:bold;transform:scaleX(0.854);'>Gradi</span>
<span class="t" style='left:946.80px;top:54.50px;font-size:7.4px;color:#a9a9a9;font-weight:bold;transform:scaleX(0.896);'>Patte</span>
<span class="t" style='left:969.00px;top:54.50px;font-size:7.4px;color:#a9a9a9;font-weight:bold;transform:scaleX(0.796);'>Histor</span>
<span class="t" style='left:991.80px;top:54.50px;font-size:7.4px;color:#a9a9a9;font-weight:bold;transform:scaleX(0.787);'>Actior</span>
<span class="t" style='left:1014.50px;top:54.50px;font-size:7.6px;color:#f4f4f4;font-weight:bold;transform:scaleX(0.812);'>Properties</span>
<div style="left:1065.6px;top:56.6px;width:6.4px;height:0.9px;background:#c8c8c8;"></div>
<div style="left:1065.6px;top:58.5px;width:6.4px;height:0.9px;background:#c8c8c8;"></div>
<div style="left:1065.6px;top:60.4px;width:6.4px;height:0.9px;background:#c8c8c8;"></div>
<div style="left:903px;top:73px;width:13.2px;height:14.6px;background:#383838;border-radius:1px;"></div>
<svg style="left:906px;top:75.6px;" width="7.4" height="9.4" viewBox="0 0 7.4 9.4"><path d="M0.5 0.5 H4.6 L6.9 2.8 V8.9 H0.5 Z M4.4 0.6 V3 H6.8" fill="none" stroke="#dcdcdc" stroke-width="1"/></svg>
<span class="t" style='left:920.50px;top:78.50px;font-size:7.2px;color:#e4e4e4;transform:scaleX(0.861);'>Document</span>
<div style="left:896.2px;top:92.3px;width:169px;height:1px;background:#454545;"></div>
<div style="left:1065.6px;top:93.5px;width:8.4px;height:274px;background:#484848;"></div>
<div style="left:1065.6px;top:104.5px;width:8.4px;height:221.5px;background:#626262;"></div>
<svg style="left:1067.4px;top:98.6px;" width="4.8" height="3" viewBox="0 0 4.8 3"><path d="M0.4 2.6 L2.4 0.5 L4.4 2.6" fill="none" stroke="#8a8a8a" stroke-width="0.9"/></svg>
<svg style="left:1067.4px;top:359.6px;" width="4.8" height="3" viewBox="0 0 4.8 3"><path d="M0.4 0.4 L2.4 2.5 L4.4 0.4" fill="none" stroke="#8a8a8a" stroke-width="0.9"/></svg>
<svg style="left:900.5px;top:100.3px;" width="5.6" height="3.4" viewBox="0 0 5.6 3.4"><path d="M0.4 0.4 L2.8 2.9 L5.199999999999999 0.4" fill="none" stroke="#a6a6a6" stroke-width="0.95"/></svg>
<span class="t" style='left:911.00px;top:99.00px;font-size:7.5px;color:#f2f2f2;font-weight:bold;transform:scaleX(0.847);'>Canvas</span>
<span class="t" style='left:928.80px;top:116.50px;font-size:7px;color:#c8c8c8;transform:scaleX(0.817);'>W</span>
<span class="t" style='left:930.00px;top:134.00px;font-size:7px;color:#c8c8c8;transform:scaleX(0.830);'>H</span>
<div style="left:938.8px;top:115px;width:31.2px;height:10.2px;background:#3f3f3f;"></div>
<div style="left:938.8px;top:132.4px;width:31.2px;height:10.2px;background:#3f3f3f;"></div>
<span class="t" style='left:940.60px;top:117.00px;font-size:7px;color:#ececec;transform:scaleX(0.883);'>2232 px</span>
<span class="t" style='left:940.60px;top:134.00px;font-size:7px;color:#ececec;transform:scaleX(0.883);'>2854 px</span>
<span class="t" style='left:980.00px;top:116.50px;font-size:7px;color:#c8c8c8;transform:scaleX(0.942);'>X</span>
<span class="t" style='left:980.00px;top:134.00px;font-size:7px;color:#c8c8c8;transform:scaleX(0.942);'>Y</span>
<div style="left:990px;top:115px;width:30.4px;height:10.2px;background:#4c4c4c;"></div>
<div style="left:990px;top:132.4px;width:30.4px;height:10.2px;background:#4c4c4c;"></div>
<span class="t" style='left:992.40px;top:118.50px;font-size:6.8px;color:#626262;transform:scaleX(0.902);'>0 px</span>
<span class="t" style='left:992.40px;top:136.00px;font-size:6.8px;color:#626262;transform:scaleX(0.902);'>0 px</span>
<svg style="left:907.8px;top:124px;" width="5" height="10" viewBox="0 0 5.4 11"><rect x="0.7" y="0.6" width="4" height="4.6" rx="2" fill="none" stroke="#cfcfcf" stroke-width="1.1"/><rect x="0.7" y="5.8" width="4" height="4.6" rx="2" fill="none" stroke="#cfcfcf" stroke-width="1.1"/><path d="M2.7 3.4 V7.6" stroke="#cfcfcf" stroke-width="1"/></svg>
<div style="left:938.8px;top:151px;width:14.2px;height:16px;background:#333333;border-radius:1px;"></div>
<svg style="left:942.2px;top:153.4px;" width="7.4" height="11.2" viewBox="0 0 7.4 11.2"><rect x="0.5" y="0.5" width="6.4" height="10.2" fill="none" stroke="#dedede" stroke-width="1"/><circle cx="3.7" cy="4.4" r="1.4" fill="#dedede"/><path d="M1.6 10 V8 Q1.6 6.4 3.7 6.4 Q5.8 6.4 5.8 8 V10 Z" fill="#dedede"/></svg>
<svg style="left:957px;top:154.6px;" width="11" height="9.4" viewBox="0 0 11 9.4"><rect x="0.5" y="0.5" width="10" height="8.4" fill="none" stroke="#dedede" stroke-width="1"/><circle cx="5.5" cy="3.6" r="1.4" fill="#dedede"/><path d="M2.8 8.4 V7 Q2.8 5.4 5.5 5.4 Q8.2 5.4 8.2 7 V8.4 Z" fill="#dedede"/></svg>
<span class="t" style='left:938.80px;top:176.00px;font-size:7px;color:#d8d8d8;transform:scaleX(0.879);'>Resolution: 250 pixels/inch</span>
<span class="t" style='left:918.80px;top:194.00px;font-size:7px;color:#c8c8c8;transform:scaleX(0.856);'>Mode</span>
<div style="left:939.5px;top:192.4px;width:81px;height:12.4px;background:#3f3f3f;border-radius:1px;"></div>
<span class="t" style='left:943.80px;top:195.00px;font-size:7.2px;color:#ececec;transform:scaleX(0.754);'>RGB Color</span>
<svg style="left:1014.6999999999999px;top:197.3px;" width="4.4" height="3" viewBox="0 0 4.4 3"><path d="M0.4 0.4 L2.2 2.5 L4.0 0.4" fill="none" stroke="#b0b0b0" stroke-width="0.95"/></svg>
<div style="left:939.5px;top:210px;width:81px;height:12.4px;background:#3f3f3f;border-radius:1px;"></div>
<span class="t" style='left:943.80px;top:213.00px;font-size:7.2px;color:#ececec;transform:scaleX(0.859);'>16 Bits/Channel</span>
<svg style="left:1014.6999999999999px;top:214.9px;" width="4.4" height="3" viewBox="0 0 4.4 3"><path d="M0.4 0.4 L2.2 2.5 L4.0 0.4" fill="none" stroke="#b0b0b0" stroke-width="0.95"/></svg>
<span class="t" style='left:926.00px;top:231.00px;font-size:7px;color:#c8c8c8;transform:scaleX(0.782);'>Fill</span>
<div style="left:938.8px;top:228.8px;width:10.6px;height:11.2px;background:#555555;outline:1px solid #444;outline-offset:-1px;"></div>
<div style="left:953px;top:228.8px;width:67.5px;height:11.8px;background:#3f3f3f;border-radius:1px;"></div>
<span class="t" style='left:957.50px;top:231.00px;font-size:7.2px;color:#ececec;transform:scaleX(0.896);'>Transparent</span>
<svg style="left:1014.6999999999999px;top:233.5px;" width="4.4" height="3" viewBox="0 0 4.4 3"><path d="M0.4 0.4 L2.2 2.5 L4.0 0.4" fill="none" stroke="#b0b0b0" stroke-width="0.95"/></svg>
<div style="left:896.2px;top:246.7px;width:169px;height:1px;background:#454545;"></div>
<svg style="left:900.5px;top:255.2px;" width="5.6" height="3.4" viewBox="0 0 5.6 3.4"><path d="M0.4 0.4 L2.8 2.9 L5.199999999999999 0.4" fill="none" stroke="#a6a6a6" stroke-width="0.95"/></svg>
<span class="t" style='left:911.00px;top:254.00px;font-size:7.5px;color:#f2f2f2;font-weight:bold;transform:scaleX(0.845);'>Rulers &amp; Grids</span>
<div style="left:903px;top:270.7px;width:15px;height:15.4px;background:#343434;border-radius:1px;"></div>
<svg style="left:905.4px;top:273.4px;" width="10.4" height="10.4" viewBox="0 0 10.4 10.4"><path d="M0 0 H10.4 V3.4 H3.4 V10.4 H0 Z" fill="#e8e8e8"/><path d="M5 1 V2.4 M7 1 V2.4 M9 1 V2.4" stroke="#444" stroke-width="0.6"/></svg>
<svg style="left:925.6px;top:272.6px;" width="11.4" height="11.8" viewBox="0 0 11.4 11.8"><rect x="0.5" y="0.5" width="10.4" height="10.8" fill="none" stroke="#d4d4d4" stroke-width="0.9"/><path d="M4 0.5 V11.3 M7.4 0.5 V11.3 M0.5 4.1 H10.9 M0.5 7.7 H10.9" stroke="#d4d4d4" stroke-width="0.8"/></svg>
<svg style="left:946.4px;top:272.6px;" width="11" height="11.8" viewBox="0 0 11 11.8"><rect x="0.5" y="0.5" width="10" height="10.8" fill="none" stroke="#d4d4d4" stroke-width="0.9"/><rect x="2.4" y="2.4" width="6.2" height="7" fill="none" stroke="#bdbdbd" stroke-width="0.8" stroke-dasharray="1.2 0.9"/></svg>
<div style="left:975px;top:272.1px;width:45.5px;height:13px;background:#3f3f3f;border-radius:1px;"></div>
<span class="t" style='left:979.50px;top:275.00px;font-size:7.2px;color:#ececec;transform:scaleX(0.803);'>Pixels</span>
<svg style="left:1014.6999999999999px;top:277.4px;" width="4.4" height="3" viewBox="0 0 4.4 3"><path d="M0.4 0.4 L2.2 2.5 L4.0 0.4" fill="none" stroke="#b0b0b0" stroke-width="0.95"/></svg>
<div style="left:896.2px;top:294.2px;width:169px;height:1px;background:#454545;"></div>
<svg style="left:900.5px;top:302.7px;" width="5.6" height="3.4" viewBox="0 0 5.6 3.4"><path d="M0.4 0.4 L2.8 2.9 L5.199999999999999 0.4" fill="none" stroke="#a6a6a6" stroke-width="0.95"/></svg>
<span class="t" style='left:911.00px;top:301.50px;font-size:7.5px;color:#f2f2f2;font-weight:bold;transform:scaleX(0.802);'>Guides</span>
<div style="left:903px;top:317px;width:15px;height:16.6px;background:#343434;border-radius:1px;"></div>
<svg style="left:905.6px;top:319.6px;" width="10" height="11.4" viewBox="0 0 10 11.4"><path d="M3 0 V11.4 M0 3.2 H10 M0 7.6 H10" stroke="#e0e0e0" stroke-width="1"/><path d="M6.6 0 V11.4" stroke="#e0e0e0" stroke-width="0.6"/></svg>
<svg style="left:925.8px;top:319.8px;" width="11" height="11.4" viewBox="0 0 11 11.4"><path d="M2.6 0 V10 M5.4 0 V10 M0 3 H8.6 M0 6.6 H6" stroke="#d0d0d0" stroke-width="0.9"/><rect x="6.6" y="7.4" width="4.2" height="3.6" fill="#d8d8d8"/><path d="M7.5 7.4 V6.2 A1.2 1.2 0 0 1 9.9 6.2 V7.4" fill="none" stroke="#d8d8d8" stroke-width="0.8"/></svg>
<div style="left:944px;top:317px;width:15px;height:16.6px;background:#343434;border-radius:1px;"></div>
<svg style="left:946.6px;top:319.8px;" width="10" height="11.4" viewBox="0 0 10 11.4"><path d="M2.2 0 V11.4 M0 3.6 H7" stroke="#e0e0e0" stroke-width="1"/><path d="M8 3.6 L5.6 2 V5.2 Z" fill="#e0e0e0"/><path d="M8.6 5 V10.6 M7 9 L8.6 10.8 L10 9" stroke="#e0e0e0" stroke-width="0.9" fill="none"/></svg>
<div style="left:975px;top:320px;width:45.5px;height:13px;background:#3f3f3f;border-radius:1px;"></div>
<div style="left:978.8px;top:326.4px;width:26.8px;height:1.3px;background:#dcdcdc;"></div>
<svg style="left:1014.6999999999999px;top:325.5px;" width="4.4" height="3" viewBox="0 0 4.4 3"><path d="M0.4 0.4 L2.2 2.5 L4.0 0.4" fill="none" stroke="#b0b0b0" stroke-width="0.95"/></svg>
<div style="left:896.2px;top:341.8px;width:169px;height:1px;background:#454545;"></div>
<svg style="left:900.5px;top:350.2px;" width="5.6" height="3.4" viewBox="0 0 5.6 3.4"><path d="M0.4 0.4 L2.8 2.9 L5.199999999999999 0.4" fill="none" stroke="#a6a6a6" stroke-width="0.95"/></svg>
<span class="t" style='left:911.00px;top:349.00px;font-size:7.5px;color:#f2f2f2;font-weight:bold;transform:scaleX(0.841);'>Quick Actions</span>
<div style="left:896.2px;top:385.5px;width:184px;height:1.6px;background:#3b3b3b;"></div>
<div style="left:896.2px;top:387px;width:184px;height:20px;background:#424242;"></div>
<div style="left:896.2px;top:387px;width:30px;height:20px;background:#535353;"></div>
<div style="left:896.2px;top:407px;width:184px;height:313px;background:#535353;"></div>
<span class="t" style='left:901.20px;top:393.00px;font-size:7.6px;color:#f4f4f4;font-weight:bold;transform:scaleX(0.792);'>Layers</span>
<div style="left:1065.6px;top:394.8px;width:6.4px;height:0.9px;background:#c8c8c8;"></div>
<div style="left:1065.6px;top:396.7px;width:6.4px;height:0.9px;background:#c8c8c8;"></div>
<div style="left:1065.6px;top:398.6px;width:6.4px;height:0.9px;background:#c8c8c8;"></div>
<div style="left:899.2px;top:413.8px;width:52.8px;height:12.2px;background:#3f3f3f;border-radius:1px;"></div>
<svg style="left:902.8px;top:416.4px;" width="6.6" height="7" viewBox="0 0 6.6 7"><circle cx="2.7" cy="2.7" r="2" fill="none" stroke="#e2e2e2" stroke-width="1.1"/><path d="M4.2 4.4 L6.2 6.6" stroke="#e2e2e2" stroke-width="1.2"/></svg>
<span class="t" style='left:912.50px;top:417.00px;font-size:7.2px;color:#ececec;transform:scaleX(0.834);'>Kind</span>
<svg style="left:945.9px;top:418.7px;" width="4.4" height="3" viewBox="0 0 4.4 3"><path d="M0.4 0.4 L2.2 2.5 L4.0 0.4" fill="none" stroke="#b0b0b0" stroke-width="0.95"/></svg>
<svg style="left:959.2px;top:416.4px;" width="8.8" height="7.4" viewBox="0 0 8.8 7.4"><rect x="0.5" y="0.5" width="7.8" height="6.4" fill="none" stroke="#dcdcdc" stroke-width="1"/><path d="M1.4 6 L3.4 3.4 L4.8 5 L5.8 4 L7.4 6 Z" fill="#dcdcdc"/><circle cx="6" cy="2.4" r="0.7" fill="#dcdcdc"/></svg>
<svg style="left:975px;top:416.2px;" width="8" height="8" viewBox="0 0 8 8"><circle cx="4" cy="4" r="3.5" fill="none" stroke="#dcdcdc" stroke-width="1"/><path d="M6.5 1.5 A3.5 3.5 0 0 1 1.5 6.5 Z" fill="#dcdcdc"/></svg>
<span class="t" style='left:990.40px;top:416.00px;font-size:9.6px;color:#dcdcdc;font-family:"Liberation Serif", serif;font-weight:bold;transform:scaleX(1.155);'>T</span>
<svg style="left:1005px;top:416px;" width="8.4" height="8.4" viewBox="0 0 8.4 8.4"><rect x="1.4" y="1.4" width="5.6" height="5.6" fill="none" stroke="#dcdcdc" stroke-width="0.9"/><rect x="0" y="0" width="2.4" height="2.4" fill="#dcdcdc"/><rect x="6" y="0" width="2.4" height="2.4" fill="#dcdcdc"/><rect x="0" y="6" width="2.4" height="2.4" fill="#dcdcdc"/><rect x="6" y="6" width="2.4" height="2.4" fill="#dcdcdc"/></svg>
<svg style="left:1020.4px;top:415.8px;" width="7.6" height="8.8" viewBox="0 0 7.6 8.8"><path d="M0.5 0.5 H4.6 L7.1 3 V8.3 H0.5 Z" fill="none" stroke="#dcdcdc" stroke-width="1"/><rect x="2.2" y="4.4" width="4.9" height="3.9" fill="#dcdcdc"/></svg>
<div style="left:1036.7px;top:419px;width:1.6px;height:5px;background:#3c3c3c;"></div>
<div style="left:1034.9px;top:413px;width:5.6px;height:5.6px;background:#f2f2f2;border-radius:50%;"></div>
<div style="left:896.2px;top:428.6px;width:184px;height:1px;background:#454545;"></div>
<div style="left:899.2px;top:433.8px;width:78.8px;height:11.2px;background:#505050;outline:1px solid #484848;outline-offset:-1px;border-radius:1px;"></div>
<span class="t" style='left:903.60px;top:436.00px;font-size:7px;color:#767676;transform:scaleX(0.864);'>Normal</span>
<span class="t" style='left:983.00px;top:436.00px;font-size:7px;color:#7a7a7a;transform:scaleX(0.876);'>Opacity:</span>
<div style="left:1009.2px;top:434.4px;width:20.8px;height:10.4px;background:#484848;"></div>
<span class="t" style='left:1011.60px;top:437.00px;font-size:6.6px;color:#646464;transform:scaleX(0.865);'>100%</span>
<div style="left:1032.4px;top:434.4px;width:7.2px;height:10.4px;background:#4b4b4b;"></div>
<svg style="left:1034.7px;top:438.40000000000003px;" width="4.4" height="2.8" viewBox="0 0 4.4 2.8"><path d="M0.4 0.4 L2.2 2.3 L4.0 0.4" fill="none" stroke="#6a6a6a" stroke-width="0.95"/></svg>
<div style="left:896.2px;top:448.4px;width:184px;height:1px;background:#454545;"></div>
<span class="t" style='left:899.20px;top:455.00px;font-size:7px;color:#7a7a7a;transform:scaleX(0.866);'>Lock:</span>
<svg style="left:920px;top:455px;" width="7.6" height="7.6" viewBox="0 0 7.6 7.6"><rect x="0.4" y="0.4" width="6.8" height="6.8" fill="none" stroke="#b6b6b6" stroke-width="0.8"/><path d="M0.4 0.4 H2.7 V2.7 H0.4 Z M4.9 0.4 H7.2 V2.7 H4.9 Z M2.7 2.7 H4.9 V4.9 H2.7 Z M0.4 4.9 H2.7 V7.2 H0.4 Z M4.9 4.9 H7.2 V7.2 H4.9 Z" fill="#b6b6b6"/></svg>
<svg style="left:933.8px;top:454.4px;" width="8.4" height="8.8" viewBox="0 0 8.4 8.8"><path d="M7.8 0.3 L8.3 0.8 L4 6 L2.9 4.9 Z" fill="#b6b6b6"/><path d="M2.4 5.4 L3.5 6.5 C3.2 7.9 1.8 8.6 0.2 8.4 C1 7.8 1 6 2.4 5.4 Z" fill="#b6b6b6"/></svg>
<svg style="left:947px;top:454.4px;" width="8.6" height="8.6" viewBox="0 0 8.6 8.6"><path d="M4.3 0 L5.7 1.7 L4.75 1.7 L4.75 3.85 L6.9 3.85 L6.9 2.9 L8.6 4.3 L6.9 5.7 L6.9 4.75 L4.75 4.75 L4.75 6.9 L5.7 6.9 L4.3 8.6 L2.9 6.9 L3.85 6.9 L3.85 4.75 L1.7 4.75 L1.7 5.7 L0 4.3 L1.7 2.9 L1.7 3.85 L3.85 3.85 L3.85 1.7 L2.9 1.7 Z" fill="#b6b6b6"/></svg>
<svg style="left:960.8px;top:454.6px;" width="8.8" height="8.4" viewBox="0 0 8.8 8.4"><path d="M1.8 0 V8.4 M0 1.8 H6 M0 6.6 H8.8 M7 3 V8.4" stroke="#b6b6b6" stroke-width="0.9" fill="none"/><path d="M6 0.4 L8.4 2.8" stroke="#b6b6b6" stroke-width="0.9"/></svg>
<svg style="left:975.6px;top:454.2px;" width="7" height="9" viewBox="0 0 7 9"><rect x="0" y="3.8" width="7" height="5.2" rx="0.6" fill="#b6b6b6"/><path d="M1.5 3.8 V2.6 A2 2 0 0 1 5.5 2.6 V3.8" fill="none" stroke="#b6b6b6" stroke-width="1.1"/></svg>
<span class="t" style='left:997.00px;top:455.00px;font-size:7px;color:#7a7a7a;transform:scaleX(0.790);'>Fill:</span>
<div style="left:1009.2px;top:453.6px;width:20.8px;height:10.4px;background:#484848;"></div>
<span class="t" style='left:1011.60px;top:457.00px;font-size:6.6px;color:#646464;transform:scaleX(0.865);'>100%</span>
<div style="left:1032.4px;top:453.6px;width:7.2px;height:10.4px;background:#4b4b4b;"></div>
<svg style="left:1034.7px;top:457.6px;" width="4.4" height="2.8" viewBox="0 0 4.4 2.8"><path d="M0.4 0.4 L2.2 2.3 L4.0 0.4" fill="none" stroke="#6a6a6a" stroke-width="0.95"/></svg>
<div style="left:896.2px;top:469.6px;width:169.4px;height:235.4px;background:#535353;"></div>
<div style="left:914.4px;top:469.6px;width:0.9px;height:235.4px;background:#484848;"></div>
<div style="left:896.2px;top:486.2px;width:169.4px;height:1px;background:#484848;"></div>
<div style="left:896.2px;top:514.6px;width:169.4px;height:1px;background:#484848;"></div>
<div style="left:896.2px;top:543.1px;width:169.4px;height:1px;background:#484848;"></div>
<div style="left:896.2px;top:571.7px;width:169.4px;height:1px;background:#484848;"></div>
<div style="left:896.2px;top:600.2px;width:169.4px;height:1px;background:#484848;"></div>
<div style="left:896.2px;top:628.8px;width:169.4px;height:1px;background:#484848;"></div>
<div style="left:896.2px;top:657.3px;width:169.4px;height:1px;background:#484848;"></div>
<div style="left:896.2px;top:685.9px;width:169.4px;height:1px;background:#484848;"></div>
<div style="left:1065.6px;top:469.6px;width:8.6px;height:235.4px;background:#484848;"></div>
<div style="left:1065.6px;top:490px;width:8.6px;height:65px;background:#646464;"></div>
<svg style="left:1067.5px;top:474.6px;" width="4.8" height="3" viewBox="0 0 4.8 3"><path d="M0.4 2.6 L2.4 0.5 L4.4 2.6" fill="none" stroke="#9a9a9a" stroke-width="0.9"/></svg>
<svg style="left:1067.5px;top:696.4px;" width="4.8" height="3" viewBox="0 0 4.8 3"><path d="M0.4 0.4 L2.4 2.5 L4.4 0.4" fill="none" stroke="#8a8a8a" stroke-width="0.9"/></svg>
<svg style="left:901px;top:475.90000000000003px;" width="9.2" height="5.8" viewBox="0 0 9.2 5.8"><path d="M0.2 2.9 C2 0.2 7.2 0.2 9 2.9 C7.2 5.6 2 5.6 0.2 2.9 Z" fill="#a9a9a9"/><circle cx="4.6" cy="2.9" r="1.7" fill="#535353"/><circle cx="4.6" cy="2.9" r="0.8" fill="#a9a9a9"/></svg>
<svg style="left:927.4px;top:476.8px;" width="5.4" height="3.6" viewBox="0 0 5.4 3.6"><path d="M0.4 0.4 L2.7 3 L5 0.4" fill="none" stroke="#a8a8a8" stroke-width="0.9"/></svg>
<svg style="left:935px;top:474.4px;" width="9" height="8" viewBox="0 0 9 8"><path d="M0 0.8 Q0 0 0.8 0 H3.2 L4.2 1.2 H8.2 Q9 1.2 9 2 V7.2 Q9 8 8.2 8 H0.8 Q0 8 0 7.2 Z" fill="#dcdcdc"/><path d="M0.6 2.6 H8.4" stroke="#535353" stroke-width="0.7"/></svg>
<span class="t" style='left:951.20px;top:475.00px;font-size:7.2px;color:#ececec;transform:scaleX(0.850);'>edite text</span>
<svg style="left:901px;top:497.90000000000003px;" width="9.2" height="5.8" viewBox="0 0 9.2 5.8"><path d="M0.2 2.9 C2 0.2 7.2 0.2 9 2.9 C7.2 5.6 2 5.6 0.2 2.9 Z" fill="#a9a9a9"/><circle cx="4.6" cy="2.9" r="1.7" fill="#535353"/><circle cx="4.6" cy="2.9" r="0.8" fill="#a9a9a9"/></svg>
<span class="t" style='left:942.80px;top:494.00px;font-size:13.4px;color:#e0e0e0;font-family:"Liberation Serif", serif;transform:scaleX(1.148);'>T</span>
<span class="t" style='left:963.00px;top:497.50px;font-size:7.2px;color:#ececec;transform:scaleX(0.834);'>Layer 2</span>
<svg style="left:901px;top:526.7px;" width="9.2" height="5.8" viewBox="0 0 9.2 5.8"><path d="M0.2 2.9 C2 0.2 7.2 0.2 9 2.9 C7.2 5.6 2 5.6 0.2 2.9 Z" fill="#a9a9a9"/><circle cx="4.6" cy="2.9" r="1.7" fill="#535353"/><circle cx="4.6" cy="2.9" r="0.8" fill="#a9a9a9"/></svg>
<div style="left:938px;top:519.6px;width:15px;height:20px;background:repeating-conic-gradient(#ffffff 0% 25%, #d2d2d2 0% 50%) 0 0/3.6px 3.6px;"></div>
<div style="left:939.4px;top:521.4px;width:2px;height:2.8px;background:#b8433a;"></div>
<span class="t" style='left:959.20px;top:526.50px;font-size:7.2px;color:#ececec;transform:scaleX(0.842);'>Layer 3</span>
<svg style="left:901px;top:555.7px;" width="9.2" height="5.8" viewBox="0 0 9.2 5.8"><path d="M0.2 2.9 C2 0.2 7.2 0.2 9 2.9 C7.2 5.6 2 5.6 0.2 2.9 Z" fill="#a9a9a9"/><circle cx="4.6" cy="2.9" r="1.7" fill="#535353"/><circle cx="4.6" cy="2.9" r="0.8" fill="#a9a9a9"/></svg>
<span class="t" style='left:942.80px;top:552.00px;font-size:13.4px;color:#e0e0e0;font-family:"Liberation Serif", serif;transform:scaleX(1.148);'>T</span>
<span class="t" style='left:963.00px;top:556.00px;font-size:6.8px;color:#ececec;transform:scaleX(0.965);'>cilta0000000...&lt;&lt;&lt;&lt;&lt;&lt;&lt;&lt;0 d</span>
<div style="left:901.4px;top:582.8000000000001px;width:8.2px;height:8.8px;background:#565656;outline:1px solid #5b5b5b;outline-offset:-1px;"></div>
<span class="t" style='left:942.80px;top:580.00px;font-size:13.4px;color:#e0e0e0;font-family:"Liberation Serif", serif;transform:scaleX(1.148);'>T</span>
<span class="t" style='left:963.00px;top:585.00px;font-size:6.8px;color:#ececec;transform:scaleX(0.829);'>1aa</span>
<svg style="left:901px;top:612.7px;" width="9.2" height="5.8" viewBox="0 0 9.2 5.8"><path d="M0.2 2.9 C2 0.2 7.2 0.2 9 2.9 C7.2 5.6 2 5.6 0.2 2.9 Z" fill="#a9a9a9"/><circle cx="4.6" cy="2.9" r="1.7" fill="#535353"/><circle cx="4.6" cy="2.9" r="0.8" fill="#a9a9a9"/></svg>
<span class="t" style='left:942.80px;top:609.00px;font-size:13.4px;color:#e0e0e0;font-family:"Liberation Serif", serif;transform:scaleX(1.148);'>T</span>
<span class="t" style='left:963.00px;top:613.00px;font-size:6.8px;color:#ececec;transform:scaleX(0.829);'>169</span>
<svg style="left:901px;top:641.1px;" width="9.2" height="5.8" viewBox="0 0 9.2 5.8"><path d="M0.2 2.9 C2 0.2 7.2 0.2 9 2.9 C7.2 5.6 2 5.6 0.2 2.9 Z" fill="#a9a9a9"/><circle cx="4.6" cy="2.9" r="1.7" fill="#535353"/><circle cx="4.6" cy="2.9" r="0.8" fill="#a9a9a9"/></svg>
<span class="t" style='left:942.80px;top:637.00px;font-size:13.4px;color:#e0e0e0;font-family:"Liberation Serif", serif;transform:scaleX(1.148);'>T</span>
<span class="t" style='left:963.00px;top:642.00px;font-size:6.8px;color:#ececec;transform:scaleX(0.987);'>m</span>
<svg style="left:901px;top:669.7px;" width="9.2" height="5.8" viewBox="0 0 9.2 5.8"><path d="M0.2 2.9 C2 0.2 7.2 0.2 9 2.9 C7.2 5.6 2 5.6 0.2 2.9 Z" fill="#a9a9a9"/><circle cx="4.6" cy="2.9" r="1.7" fill="#535353"/><circle cx="4.6" cy="2.9" r="0.8" fill="#a9a9a9"/></svg>
<span class="t" style='left:942.80px;top:666.00px;font-size:13.4px;color:#e0e0e0;font-family:"Liberation Serif", serif;transform:scaleX(1.148);'>T</span>
<span class="t" style='left:963.00px;top:670.00px;font-size:6.8px;color:#ececec;transform:scaleX(0.855);'>129 1 a</span>
<svg style="left:901px;top:697.7px;" width="9.2" height="5.8" viewBox="0 0 9.2 5.8"><path d="M0.2 2.9 C2 0.2 7.2 0.2 9 2.9 C7.2 5.6 2 5.6 0.2 2.9 Z" fill="#a9a9a9"/><circle cx="4.6" cy="2.9" r="1.7" fill="#535353"/><circle cx="4.6" cy="2.9" r="0.8" fill="#a9a9a9"/></svg>
<span class="t" style='left:942.80px;top:694.00px;font-size:13.4px;color:#e0e0e0;font-family:"Liberation Serif", serif;transform:scaleX(1.148);'>T</span>
<span class="t" style='left:963.00px;top:698.00px;font-size:6.8px;color:#ececec;transform:scaleX(0.852);'>01.01.1990</span>
<div style="left:896.2px;top:705px;width:184px;height:15px;background:#535353;"></div>
<div style="left:896.2px;top:705px;width:184px;height:1px;background:#474747;"></div>
<svg style="left:948px;top:711px;" width="10.2" height="5.4" viewBox="0 0 10.2 5.4"><rect x="0.5" y="0.5" width="5" height="4.4" rx="2.2" fill="none" stroke="#757575" stroke-width="1"/><rect x="4.7" y="0.5" width="5" height="4.4" rx="2.2" fill="none" stroke="#757575" stroke-width="1"/></svg>
<span class="t" style='left:966.80px;top:710.95px;font-size:8.4px;color:#757575;font-family:"Liberation Serif", serif;font-weight:bold;font-style:italic;'>fx</span>
<svg style="left:982px;top:709.6px;" width="8.6" height="8" viewBox="0 0 8.6 8"><rect x="0" y="0" width="8.6" height="8" fill="#d8d8d8"/><rect x="1.6" y="1.6" width="5.4" height="4.8" rx="1.4" fill="#535353"/></svg>
<svg style="left:1000px;top:709.6px;" width="8.2" height="8.2" viewBox="0 0 8.2 8.2"><circle cx="4.1" cy="4.1" r="3.6" fill="none" stroke="#d8d8d8" stroke-width="1"/><path d="M6.65 1.55 A3.6 3.6 0 0 1 1.55 6.65 Z" fill="#d8d8d8"/></svg>
<svg style="left:1016px;top:709.8px;" width="8.6" height="7.6" viewBox="0 0 8.6 7.6"><path d="M0 0.8 Q0 0 0.8 0 H3 L4 1.2 H7.8 Q8.6 1.2 8.6 2 V6.8 Q8.6 7.6 7.8 7.6 H0.8 Q0 7.6 0 6.8 Z" fill="#d8d8d8"/></svg>
<svg style="left:1033.8px;top:709.2px;" width="7" height="8.8" viewBox="0 0 7 8.8"><rect x="0.5" y="0.5" width="6" height="7.8" fill="none" stroke="#d8d8d8" stroke-width="1"/><path d="M3.5 2.6 V6.2 M1.7 4.4 H5.3" stroke="#d8d8d8" stroke-width="0.9"/></svg>
<svg style="left:1050.6px;top:709.4px;" width="7" height="8.6" viewBox="0 0 7 8.6"><path d="M0 1.6 H7 M2.4 1.6 V0.5 H4.6 V1.6" stroke="#757575" stroke-width="0.9" fill="none"/><path d="M0.8 2.6 H6.2 L5.7 8.6 H1.3 Z" fill="#757575"/></svg>
</div></body></html>
